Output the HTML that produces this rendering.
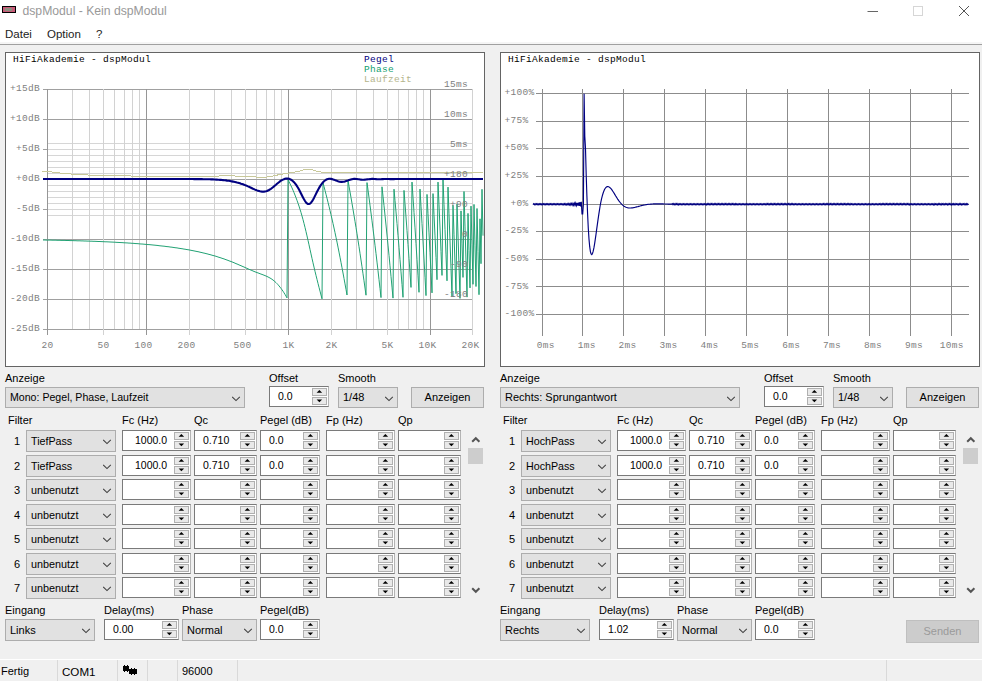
<!DOCTYPE html>
<html><head><meta charset="utf-8"><style>
*{margin:0;padding:0;box-sizing:border-box}
html,body{width:982px;height:681px;overflow:hidden;background:#f0f0f0;font-family:"Liberation Sans",sans-serif;font-size:11px;color:#000}
.a{position:absolute;white-space:nowrap}
</style></head><body>
<div class="a" style="left:0;top:0;width:982px;height:44px;background:#fff"></div>
<div class="a" style="left:0;top:42px;width:982px;height:2px;background:#f5f5f5"></div>
<div class="a" style="left:0;top:44px;width:982px;height:1px;background:#a0a0a0"></div>
<svg class="a" style="left:0;top:0" width="982" height="681" shape-rendering="crispEdges">
<rect x="5.5" y="52.5" width="479" height="314" fill="#fff" stroke="#646464"/>
<line x1="47" x2="473" y1="143.5" y2="143.5" stroke="#d6d6d6"/>
<line x1="47" x2="473" y1="149.5" y2="149.5" stroke="#d6d6d6"/>
<line x1="47" x2="473" y1="155.5" y2="155.5" stroke="#d6d6d6"/>
<line x1="47" x2="473" y1="161.5" y2="161.5" stroke="#d6d6d6"/>
<line x1="47" x2="473" y1="167.5" y2="167.5" stroke="#d6d6d6"/>
<line x1="47" x2="473" y1="173.5" y2="173.5" stroke="#d6d6d6"/>
<line x1="47" x2="473" y1="185.5" y2="185.5" stroke="#d6d6d6"/>
<line x1="47" x2="473" y1="191.5" y2="191.5" stroke="#d6d6d6"/>
<line x1="47" x2="473" y1="197.5" y2="197.5" stroke="#d6d6d6"/>
<line x1="47" x2="473" y1="203.5" y2="203.5" stroke="#d6d6d6"/>
<line x1="47" x2="473" y1="209.5" y2="209.5" stroke="#d6d6d6"/>
<line x1="47" x2="473" y1="215.5" y2="215.5" stroke="#d6d6d6"/>
<line x1="72.5" x2="72.5" y1="89" y2="329" stroke="#d2d2d2"/>
<line x1="89.5" x2="89.5" y1="89" y2="329" stroke="#d2d2d2"/>
<line x1="114.5" x2="114.5" y1="89" y2="329" stroke="#d2d2d2"/>
<line x1="124.5" x2="124.5" y1="89" y2="329" stroke="#d2d2d2"/>
<line x1="132.5" x2="132.5" y1="89" y2="329" stroke="#d2d2d2"/>
<line x1="139.5" x2="139.5" y1="89" y2="329" stroke="#d2d2d2"/>
<line x1="214.5" x2="214.5" y1="89" y2="329" stroke="#d2d2d2"/>
<line x1="231.5" x2="231.5" y1="89" y2="329" stroke="#d2d2d2"/>
<line x1="256.5" x2="256.5" y1="89" y2="329" stroke="#d2d2d2"/>
<line x1="266.5" x2="266.5" y1="89" y2="329" stroke="#d2d2d2"/>
<line x1="274.5" x2="274.5" y1="89" y2="329" stroke="#d2d2d2"/>
<line x1="281.5" x2="281.5" y1="89" y2="329" stroke="#d2d2d2"/>
<line x1="356.5" x2="356.5" y1="89" y2="329" stroke="#d2d2d2"/>
<line x1="373.5" x2="373.5" y1="89" y2="329" stroke="#d2d2d2"/>
<line x1="398.5" x2="398.5" y1="89" y2="329" stroke="#d2d2d2"/>
<line x1="408.5" x2="408.5" y1="89" y2="329" stroke="#d2d2d2"/>
<line x1="416.5" x2="416.5" y1="89" y2="329" stroke="#d2d2d2"/>
<line x1="423.5" x2="423.5" y1="89" y2="329" stroke="#d2d2d2"/>
<line x1="43" x2="473" y1="89.5" y2="89.5" stroke="#a0a0a0"/>
<line x1="43" x2="473" y1="119.5" y2="119.5" stroke="#a0a0a0"/>
<line x1="43" x2="47" y1="149.5" y2="149.5" stroke="#a0a0a0"/>
<line x1="43" x2="473" y1="179.5" y2="179.5" stroke="#a0a0a0"/>
<line x1="43" x2="47" y1="209.5" y2="209.5" stroke="#a0a0a0"/>
<line x1="43" x2="473" y1="239.5" y2="239.5" stroke="#a0a0a0"/>
<line x1="43" x2="473" y1="269.5" y2="269.5" stroke="#a0a0a0"/>
<line x1="43" x2="473" y1="299.5" y2="299.5" stroke="#a0a0a0"/>
<line x1="43" x2="473" y1="329.5" y2="329.5" stroke="#a0a0a0"/>
<line x1="47.5" x2="47.5" y1="89" y2="335" stroke="#969696"/>
<line x1="146.5" x2="146.5" y1="89" y2="335" stroke="#969696"/>
<line x1="288.5" x2="288.5" y1="89" y2="335" stroke="#969696"/>
<line x1="430.5" x2="430.5" y1="89" y2="335" stroke="#969696"/>
<line x1="103.5" x2="103.5" y1="89" y2="335" stroke="#d2d2d2"/>
<line x1="189.5" x2="189.5" y1="89" y2="335" stroke="#d2d2d2"/>
<line x1="245.5" x2="245.5" y1="89" y2="335" stroke="#d2d2d2"/>
<line x1="331.5" x2="331.5" y1="89" y2="335" stroke="#d2d2d2"/>
<line x1="387.5" x2="387.5" y1="89" y2="335" stroke="#d2d2d2"/>
<line x1="472.5" x2="472.5" y1="89" y2="335" stroke="#d2d2d2"/>
<g font-family="Liberation Mono" font-size="9.5" letter-spacing="0.3" fill="#808080">
<text x="40" y="91.3" text-anchor="end">+15dB</text>
<text x="40" y="121.3" text-anchor="end">+10dB</text>
<text x="40" y="151.3" text-anchor="end">+5dB</text>
<text x="40" y="181.3" text-anchor="end">+0dB</text>
<text x="40" y="211.3" text-anchor="end">-5dB</text>
<text x="40" y="241.3" text-anchor="end">-10dB</text>
<text x="40" y="271.3" text-anchor="end">-15dB</text>
<text x="40" y="301.3" text-anchor="end">-20dB</text>
<text x="40" y="331.3" text-anchor="end">-25dB</text>
<text x="41.5" y="348.3">20</text>
<text x="97.5" y="348.3">50</text>
<text x="134.5" y="348.3">100</text>
<text x="177.5" y="348.3">200</text>
<text x="233.5" y="348.3">500</text>
<text x="282.5" y="348.3">1K</text>
<text x="325.5" y="348.3">2K</text>
<text x="381.5" y="348.3">5K</text>
<text x="418.5" y="348.3">10K</text>
<text x="461.5" y="348.3">20K</text>
</g>
<g font-family="Liberation Mono" font-size="9.5" letter-spacing="0.3">
<text x="13" y="62" fill="#000">HiFiAkademie - dspModul</text>
<text x="364" y="62" fill="#000080">Pegel</text>
<text x="364" y="72" fill="#10a070">Phase</text>
<text x="364" y="82" fill="#b4b48c">Laufzeit</text>
</g>
<polyline fill="none" stroke="#c8c89a" stroke-width="1" points="42.0,171.2 47.0,171.2 47.4,171.3 47.7,171.3 48.1,171.4 48.4,171.4 48.8,171.5 49.1,171.5 49.5,171.6 49.8,171.6 50.2,171.7 50.6,171.8 50.9,171.8 51.3,171.9 51.6,171.9 52.0,172.0 52.3,172.0 52.7,172.1 53.0,172.1 53.4,172.2 53.8,172.2 54.1,172.2 54.5,172.3 54.8,172.3 55.2,172.4 55.5,172.4 55.9,172.5 56.2,172.5 56.6,172.6 56.9,172.6 57.3,172.6 57.7,172.7 58.0,172.7 58.4,172.8 58.7,172.8 59.1,172.9 59.4,172.9 59.8,172.9 60.1,173.0 60.5,173.0 60.9,173.0 61.2,173.1 61.6,173.1 61.9,173.2 62.3,173.2 62.6,173.2 63.0,173.3 63.3,173.3 63.7,173.3 64.1,173.4 64.4,173.4 64.8,173.4 65.1,173.5 65.5,173.5 65.8,173.5 66.2,173.6 66.5,173.6 66.9,173.6 67.3,173.7 67.6,173.7 68.0,173.7 68.3,173.7 68.7,173.8 69.0,173.8 69.4,173.8 69.7,173.9 70.1,173.9 70.4,173.9 70.8,173.9 71.2,174.0 71.5,174.0 71.9,174.0 72.2,174.0 72.6,174.1 72.9,174.1 73.3,174.1 73.6,174.1 74.0,174.2 74.4,174.2 74.7,174.2 75.1,174.2 75.4,174.3 75.8,174.3 76.1,174.3 76.5,174.3 76.8,174.4 77.2,174.4 77.6,174.4 77.9,174.4 78.3,174.4 78.6,174.5 79.0,174.5 79.3,174.5 79.7,174.5 80.0,174.5 80.4,174.6 80.8,174.6 81.1,174.6 81.5,174.6 81.8,174.6 82.2,174.7 82.5,174.7 82.9,174.7 83.2,174.7 83.6,174.7 84.0,174.8 84.3,174.8 84.7,174.8 85.0,174.8 85.4,174.8 85.7,174.8 86.1,174.9 86.4,174.9 86.8,174.9 87.1,174.9 87.5,174.9 87.9,174.9 88.2,175.0 88.6,175.0 88.9,175.0 89.3,175.0 89.6,175.0 90.0,175.0 90.3,175.0 90.7,175.1 91.1,175.1 91.4,175.1 91.8,175.1 92.1,175.1 92.5,175.1 92.8,175.1 93.2,175.2 93.5,175.2 93.9,175.2 94.3,175.2 94.6,175.2 95.0,175.2 95.3,175.2 95.7,175.2 96.0,175.3 96.4,175.3 96.7,175.3 97.1,175.3 97.5,175.3 97.8,175.3 98.2,175.3 98.5,175.3 98.9,175.3 99.2,175.4 99.6,175.4 99.9,175.4 100.3,175.4 100.6,175.4 101.0,175.4 101.4,175.4 101.7,175.4 102.1,175.4 102.4,175.4 102.8,175.5 103.1,175.5 103.5,175.5 103.8,175.5 104.2,175.5 104.6,175.5 104.9,175.5 105.3,175.5 105.6,175.5 106.0,175.5 106.3,175.5 106.7,175.6 107.0,175.6 107.4,175.6 107.8,175.6 108.1,175.6 108.5,175.6 108.8,175.6 109.2,175.6 109.5,175.6 109.9,175.6 110.2,175.6 110.6,175.6 111.0,175.7 111.3,175.7 111.7,175.7 112.0,175.7 112.4,175.7 112.7,175.7 113.1,175.7 113.4,175.7 113.8,175.7 114.2,175.7 114.5,175.7 114.9,175.7 115.2,175.7 115.6,175.7 115.9,175.7 116.3,175.8 116.6,175.8 117.0,175.8 117.3,175.8 117.7,175.8 118.1,175.8 118.4,175.8 118.8,175.8 119.1,175.8 119.5,175.8 119.8,175.8 120.2,175.8 120.5,175.8 120.9,175.8 121.3,175.8 121.6,175.8 122.0,175.8 122.3,175.8 122.7,175.9 123.0,175.9 123.4,175.9 123.7,175.9 124.1,175.9 124.5,175.9 124.8,175.9 125.2,175.9 125.5,175.9 125.9,175.9 126.2,175.9 126.6,175.9 126.9,175.9 127.3,175.9 127.7,175.9 128.0,175.9 128.4,175.9 128.7,175.9 129.1,175.9 129.4,175.9 129.8,175.9 130.1,175.9 130.5,175.9 130.8,176.0 131.2,176.0 131.6,176.0 131.9,176.0 132.3,176.0 132.6,176.0 133.0,176.0 133.3,176.0 133.7,176.0 134.0,176.0 134.4,176.0 134.8,176.0 135.1,176.0 135.5,176.0 135.8,176.0 136.2,176.0 136.5,176.0 136.9,176.0 137.2,176.0 137.6,176.0 138.0,176.0 138.3,176.0 138.7,176.0 139.0,176.0 139.4,176.0 139.7,176.0 140.1,176.0 140.4,176.0 140.8,176.0 141.2,176.0 141.5,176.0 141.9,176.0 142.2,176.0 142.6,176.0 142.9,176.1 143.3,176.1 143.6,176.1 144.0,176.1 144.4,176.1 144.7,176.1 145.1,176.1 145.4,176.1 145.8,176.1 146.1,176.1 146.5,176.1 146.8,176.1 147.2,176.1 147.5,176.1 147.9,176.1 148.3,176.1 148.6,176.1 149.0,176.1 149.3,176.1 149.7,176.1 150.0,176.1 150.4,176.1 150.7,176.1 151.1,176.1 151.5,176.1 151.8,176.1 152.2,176.1 152.5,176.1 152.9,176.1 153.2,176.1 153.6,176.1 153.9,176.1 154.3,176.1 154.7,176.1 155.0,176.1 155.4,176.1 155.7,176.1 156.1,176.1 156.4,176.1 156.8,176.1 157.1,176.1 157.5,176.1 157.9,176.1 158.2,176.1 158.6,176.1 158.9,176.1 159.3,176.1 159.6,176.1 160.0,176.1 160.3,176.1 160.7,176.1 161.1,176.1 161.4,176.1 161.8,176.1 162.1,176.1 162.5,176.1 162.8,176.1 163.2,176.1 163.5,176.1 163.9,176.1 164.2,176.1 164.6,176.1 165.0,176.1 165.3,176.1 165.7,176.1 166.0,176.1 166.4,176.1 166.7,176.1 167.1,176.1 167.4,176.1 167.8,176.1 168.2,176.1 168.5,176.1 168.9,176.1 169.2,176.1 169.6,176.1 169.9,176.1 170.3,176.1 170.6,176.1 171.0,176.1 171.4,176.1 171.7,176.1 172.1,176.1 172.4,176.1 172.8,176.1 173.1,176.1 173.5,176.1 173.8,176.1 174.2,176.1 174.6,176.1 174.9,176.1 175.3,176.1 175.6,176.1 176.0,176.1 176.3,176.1 176.7,176.1 177.0,176.1 177.4,176.1 177.7,176.1 178.1,176.1 178.5,176.1 178.8,176.1 179.2,176.1 179.5,176.1 179.9,176.1 180.2,176.1 180.6,176.1 180.9,176.1 181.3,176.1 181.7,176.1 182.0,176.1 182.4,176.1 182.7,176.1 183.1,176.1 183.4,176.1 183.8,176.1 184.1,176.1 184.5,176.1 184.9,176.1 185.2,176.1 185.6,176.1 185.9,176.1 186.3,176.1 186.6,176.1 187.0,176.1 187.3,176.1 187.7,176.1 188.1,176.1 188.4,176.1 188.8,176.1 189.1,176.1 189.5,176.1 189.8,176.1 190.2,176.1 190.5,176.1 190.9,176.1 191.3,176.1 191.6,176.1 192.0,176.1 192.3,176.1 192.7,176.1 193.0,176.1 193.4,176.1 193.7,176.1 194.1,176.1 194.4,176.1 194.8,176.1 195.2,176.1 195.5,176.1 195.9,176.1 196.2,176.1 196.6,176.1 196.9,176.1 197.3,176.1 197.6,176.1 198.0,176.1 198.4,176.1 198.7,176.1 199.1,176.1 199.4,176.1 199.8,176.1 200.1,176.1 200.5,176.1 200.8,176.1 201.2,176.1 201.6,176.1 201.9,176.1 202.3,176.1 202.6,176.1 203.0,176.1 203.3,176.1 203.7,176.1 204.0,176.0 204.4,176.0 204.8,176.0 205.1,176.0 205.5,176.0 205.8,176.0 206.2,176.0 206.5,176.0 206.9,176.0 207.2,176.0 207.6,176.0 207.9,176.0 208.3,176.0 208.7,176.0 209.0,176.0 209.4,176.0 209.7,176.0 210.1,176.0 210.4,176.0 210.8,176.0 211.1,176.0 211.5,176.0 211.9,176.0 212.2,176.0 212.6,176.0 212.9,176.0 213.3,176.0 213.6,176.0 214.0,176.0 214.3,176.0 214.7,176.0 215.1,176.0 215.4,176.0 215.8,176.0 216.1,176.0 216.5,176.0 216.8,176.0 217.2,176.0 217.5,176.0 217.9,176.0 218.3,176.0 218.6,176.0 219.0,176.0 219.3,175.9 219.7,175.9 220.0,175.9 220.4,175.9 220.7,175.9 221.1,175.9 221.5,175.9 221.8,175.9 222.2,175.9 222.5,175.9 222.9,175.9 223.2,175.9 223.6,175.9 223.9,175.9 224.3,175.9 224.6,175.9 225.0,175.9 225.4,175.9 225.7,175.9 226.1,175.9 226.4,175.9 226.8,175.9 227.1,175.9 227.5,175.9 227.8,175.9 228.2,175.9 228.6,175.9 228.9,175.9 229.3,175.9 229.6,175.9 230.0,175.9 230.3,175.9 230.7,175.9 231.0,175.9 231.4,175.9 231.8,175.9 232.1,175.9 232.5,175.9 232.8,175.9 233.2,175.9 233.5,175.9 233.9,175.9 234.2,175.9 234.6,176.0 235.0,176.0 235.3,176.0 235.7,176.0 236.0,176.0 236.4,176.0 236.7,176.0 237.1,176.0 237.4,176.0 237.8,176.0 238.1,176.0 238.5,176.0 238.9,176.0 239.2,176.0 239.6,176.0 239.9,176.1 240.3,176.1 240.6,176.1 241.0,176.1 241.3,176.1 241.7,176.1 242.1,176.1 242.4,176.1 242.8,176.1 243.1,176.2 243.5,176.2 243.8,176.2 244.2,176.2 244.5,176.2 244.9,176.2 245.3,176.2 245.6,176.3 246.0,176.3 246.3,176.3 246.7,176.3 247.0,176.3 247.4,176.4 247.7,176.4 248.1,176.4 248.5,176.4 248.8,176.4 249.2,176.5 249.5,176.5 249.9,176.5 250.2,176.5 250.6,176.6 250.9,176.6 251.3,176.6 251.7,176.6 252.0,176.7 252.4,176.7 252.7,176.7 253.1,176.7 253.4,176.8 253.8,176.8 254.1,176.8 254.5,176.8 254.8,176.9 255.2,176.9 255.6,176.9 255.9,176.9 256.3,177.0 256.6,177.0 257.0,177.0 257.3,177.0 257.7,177.1 258.0,177.1 258.4,177.1 258.8,177.1 259.1,177.1 259.5,177.2 259.8,177.2 260.2,177.2 260.5,177.2 260.9,177.2 261.2,177.2 261.6,177.2 262.0,177.2 262.3,177.2 262.7,177.2 263.0,177.2 263.4,177.2 263.7,177.2 264.1,177.2 264.4,177.2 264.8,177.2 265.2,177.1 265.5,177.1 265.9,177.1 266.2,177.1 266.6,177.0 266.9,177.0 267.3,177.0 267.6,176.9 268.0,176.9 268.3,176.8 268.7,176.8 269.1,176.7 269.4,176.7 269.8,176.6 270.1,176.5 270.5,176.5 270.8,176.4 271.2,176.4 271.5,176.3 271.9,176.2 272.3,176.1 272.6,176.1 273.0,176.0 273.3,175.9 273.7,175.9 274.0,175.8 274.4,175.7 274.7,175.6 275.1,175.5 275.5,175.5 275.8,175.4 276.2,175.3 276.5,175.2 276.9,175.2 277.2,175.1 277.6,175.0 277.9,174.9 278.3,174.9 278.7,174.8 279.0,174.7 279.4,174.6 279.7,174.6 280.1,174.5 280.4,174.4 280.8,174.4 281.1,174.3 281.5,174.2 281.9,174.2 282.2,174.1 282.6,174.0 282.9,174.0 283.3,173.9 283.6,173.9 284.0,173.8 284.3,173.7 284.7,173.7 285.0,173.6 285.4,173.6 285.8,173.5 286.1,173.4 286.5,173.4 286.8,173.3 287.2,173.3 287.5,173.2 287.9,173.2 288.2,173.1 288.6,173.1 289.0,173.0 289.3,172.9 289.7,172.9 290.0,172.8 290.4,172.8 290.7,172.7 291.1,172.7 291.4,172.6 291.8,172.6 292.2,172.5 292.5,172.4 292.9,172.4 293.2,172.3 293.6,172.3 293.9,172.2 294.3,172.1 294.6,172.1 295.0,172.0 295.4,171.9 295.7,171.9 296.1,171.8 296.4,171.7 296.8,171.7 297.1,171.6 297.5,171.5 297.8,171.4 298.2,171.3 298.5,171.2 298.9,171.2 299.3,171.1 299.6,171.0 300.0,170.9 300.3,170.8 300.7,170.7 301.0,170.6 301.4,170.5 301.7,170.4 302.1,170.3 302.5,170.1 302.8,170.0 303.2,169.9 303.5,169.8 303.9,169.7 304.2,169.6 304.6,169.5 304.9,169.4 305.3,169.3 305.7,169.2 306.0,169.2 306.4,169.1 306.7,169.1 307.1,169.0 307.4,169.0 307.8,169.0 308.1,169.0 308.5,169.0 308.9,169.0 309.2,169.0 309.6,169.1 309.9,169.1 310.3,169.2 310.6,169.3 311.0,169.4 311.3,169.5 311.7,169.6 312.1,169.7 312.4,169.8 312.8,169.9 313.1,170.1 313.5,170.2 313.8,170.3 314.2,170.4 314.5,170.5 314.9,170.7 315.2,170.8 315.6,170.9 316.0,171.0 316.3,171.1 316.7,171.2 317.0,171.3 317.4,171.4 317.7,171.5 318.1,171.5 318.4,171.6 318.8,171.7 319.2,171.8 319.5,171.8 319.9,171.9 320.2,171.9 320.6,172.0 320.9,172.0 321.3,172.1 321.6,172.1 322.0,172.2 322.4,172.2 322.7,172.2 323.1,172.3 323.4,172.3 323.8,172.3 324.1,172.3 324.5,172.4 324.8,172.4 325.2,172.4 325.6,172.4 325.9,172.4 326.3,172.4 326.6,172.4 327.0,172.4 327.3,172.4 327.7,172.5 328.0,172.5 328.4,172.5 328.7,172.5 329.1,172.4 329.5,172.4 329.8,172.4 330.2,172.4 330.5,172.4 330.9,172.4 331.2,172.4 331.6,172.4 331.9,172.4 332.3,172.4 332.7,172.4 333.0,172.3 333.4,172.3 333.7,172.3 334.1,172.3 334.4,172.3 334.8,172.3 335.1,172.2 335.5,172.2 335.9,172.2 336.2,172.2 336.6,172.2 336.9,172.2 337.3,172.2 337.6,172.2 338.0,172.1 338.3,172.1 338.7,172.1 339.1,172.1 339.4,172.1 339.8,172.1 340.1,172.1 340.5,172.1 340.8,172.1 341.2,172.1 341.5,172.1 341.9,172.1 342.3,172.2 342.6,172.2 343.0,172.2 343.3,172.2 343.7,172.2 344.0,172.2 344.4,172.2 344.7,172.3 345.1,172.3 345.4,172.3 345.8,172.3 346.2,172.3 346.5,172.3 346.9,172.4 347.2,172.4 347.6,172.4 347.9,172.4 348.3,172.4 348.6,172.5 349.0,172.5 349.4,172.5 349.7,172.5 350.1,172.5 350.4,172.5 350.8,172.5 351.1,172.6 351.5,172.6 351.8,172.6 352.2,172.6 352.6,172.6 352.9,172.6 353.3,172.6 353.6,172.6 354.0,172.6 354.3,172.6 354.7,172.6 355.0,172.6 355.4,172.6 355.8,172.6 356.1,172.6 356.5,172.6 356.8,172.6 357.2,172.6 357.5,172.6 357.9,172.6 358.2,172.6 358.6,172.6 358.9,172.6 359.3,172.6 359.7,172.6 360.0,172.6 360.4,172.6 360.7,172.6 361.1,172.6 361.4,172.6 361.8,172.6 362.1,172.6 362.5,172.6 362.9,172.6 363.2,172.6 363.6,172.6 363.9,172.6 364.3,172.6 364.6,172.6 365.0,172.6 365.3,172.6 365.7,172.6 366.1,172.6 366.4,172.6 366.8,172.6 367.1,172.6 367.5,172.7 367.8,172.7 368.2,172.7 368.5,172.7 368.9,172.7 369.3,172.7 369.6,172.7 370.0,172.7 370.3,172.7 370.7,172.7 371.0,172.7 371.4,172.7 371.7,172.7 372.1,172.7 372.5,172.7 372.8,172.7 373.2,172.7 373.5,172.7 373.9,172.7 374.2,172.7 374.6,172.7 374.9,172.7 375.3,172.7 375.6,172.7 376.0,172.7 376.4,172.7 376.7,172.7 377.1,172.7 377.4,172.7 377.8,172.7 378.1,172.7 378.5,172.7 378.8,172.7 379.2,172.7 379.6,172.7 379.9,172.7 380.3,172.7 380.6,172.7 381.0,172.7 381.3,172.7 381.7,172.7 382.0,172.7 382.4,172.7 382.8,172.7 383.1,172.8 383.5,172.8 383.8,172.8 384.2,172.8 384.5,172.8 384.9,172.8 385.2,172.8 385.6,172.8 386.0,172.8 386.3,172.8 386.7,172.8 387.0,172.8 387.4,172.8 387.7,172.8 388.1,172.8 388.4,172.8 388.8,172.8 389.2,172.8 389.5,172.8 389.9,172.8 390.2,172.8 390.6,172.8 390.9,172.8 391.3,172.8 391.6,172.8 392.0,172.8 392.3,172.8 392.7,172.8 393.1,172.8 393.4,172.8 393.8,172.8 394.1,172.8 394.5,172.8 394.8,172.8 395.2,172.8 395.5,172.8 395.9,172.8 396.3,172.8 396.6,172.8 397.0,172.8 397.3,172.8 397.7,172.8 398.0,172.8 398.4,172.8 398.7,172.8 399.1,172.8 399.5,172.8 399.8,172.8 400.2,172.8 400.5,172.8 400.9,172.8 401.2,172.8 401.6,172.8 401.9,172.8 402.3,172.8 402.7,172.8 403.0,172.8 403.4,172.8 403.7,172.8 404.1,172.8 404.4,172.8 404.8,172.8 405.1,172.8 405.5,172.8 405.8,172.8 406.2,172.8 406.6,172.8 406.9,172.8 407.3,172.8 407.6,172.8 408.0,172.8 408.3,172.8 408.7,172.8 409.0,172.8 409.4,172.8 409.8,172.8 410.1,172.8 410.5,172.8 410.8,172.8 411.2,172.8 411.5,172.8 411.9,172.8 412.2,172.8 412.6,172.8 413.0,172.8 413.3,172.8 413.7,172.8 414.0,172.8 414.4,172.8 414.7,172.8 415.1,172.8 415.4,172.8 415.8,172.8 416.2,172.8 416.5,172.8 416.9,172.8 417.2,172.8 417.6,172.8 417.9,172.8 418.3,172.8 418.6,172.8 419.0,172.8 419.4,172.8 419.7,172.8 420.1,172.8 420.4,172.8 420.8,172.8 421.1,172.8 421.5,172.8 421.8,172.8 422.2,172.8 422.5,172.8 422.9,172.8 423.3,172.8 423.6,172.8 424.0,172.8 424.3,172.8 424.7,172.8 425.0,172.8 425.4,172.8 425.7,172.8 426.1,172.8 426.5,172.8 426.8,172.8 427.2,172.8 427.5,172.9 427.9,172.9 428.2,172.9 428.6,172.9 428.9,172.9 429.3,172.9 429.7,172.9 430.0,172.9 430.4,172.9 430.7,172.9 431.1,172.9 431.4,172.9 431.8,172.9 432.1,172.9 432.5,172.9 432.9,172.9 433.2,172.9 433.6,172.9 433.9,172.9 434.3,172.9 434.6,172.9 435.0,172.9 435.3,172.9 435.7,172.9 436.0,172.9 436.4,172.9 436.8,172.9 437.1,172.9 437.5,172.9 437.8,172.9 438.2,172.9 438.5,172.9 438.9,172.9 439.2,172.9 439.6,172.9 440.0,172.9 440.3,172.9 440.7,172.9 441.0,172.9 441.4,172.9 441.7,172.9 442.1,172.9 442.4,172.9 442.8,172.9 443.2,172.9 443.5,172.9 443.9,172.9 444.2,172.9 444.6,172.9 444.9,172.9 445.3,172.9 445.6,172.9 446.0,172.9 446.4,172.9 446.7,172.9 447.1,172.9 447.4,172.9 447.8,172.9 448.1,172.9 448.5,172.9 448.8,172.9 449.2,172.9 449.6,172.9 449.9,172.9 450.3,172.9 450.6,172.9 451.0,172.9 451.3,172.9 451.7,172.9 452.0,172.9 452.4,172.9 452.7,172.9 453.1,172.9 453.5,172.9 453.8,172.9 454.2,172.9 454.5,172.9 454.9,172.9 455.2,172.9 455.6,172.9 455.9,172.9 456.3,172.9 456.7,172.9 457.0,172.9 457.4,172.9 457.7,172.9 458.1,172.9 458.4,172.9 458.8,172.9 459.1,172.9 459.5,172.9 459.9,172.9 460.2,172.9 460.6,172.9 460.9,172.9 461.3,172.9 461.6,172.9 462.0,172.9 462.3,172.9 462.7,172.9 463.1,172.9 463.4,172.9 463.8,172.9 464.1,172.9 464.5,172.9 464.8,172.9 465.2,172.9 465.5,172.9 465.9,172.9 466.2,172.9 466.6,172.9 467.0,172.9 467.3,172.9 467.7,172.9 468.0,172.9 468.4,172.9 468.7,172.9 469.1,172.9 469.4,172.9 469.8,172.9 470.2,172.9 470.5,172.9 470.9,172.9 471.2,172.9 471.6,172.9 471.9,172.9 472.3,172.9 472.6,172.9 473.0,172.9 483.0,172.9"/>
<polyline fill="none" stroke="#22a274" stroke-width="1" shape-rendering="geometricPrecision" points="43.0,240.0 44.0,240.0 45.0,240.0 46.0,240.1 47.0,240.1 48.0,240.1 49.0,240.1 50.0,240.1 51.0,240.1 52.0,240.2 53.0,240.2 54.0,240.2 55.0,240.2 56.0,240.2 57.0,240.3 58.0,240.3 59.0,240.3 60.0,240.3 61.0,240.4 62.0,240.4 63.0,240.4 64.0,240.4 65.0,240.4 66.0,240.5 67.0,240.5 68.0,240.5 69.0,240.5 70.0,240.6 71.0,240.6 72.0,240.6 73.0,240.6 74.0,240.7 75.0,240.7 76.0,240.7 77.0,240.8 78.0,240.8 79.0,240.8 80.0,240.8 81.0,240.9 82.0,240.9 83.0,240.9 84.0,241.0 85.0,241.0 86.0,241.0 87.0,241.1 88.0,241.1 89.0,241.1 90.0,241.2 91.0,241.2 92.0,241.2 93.0,241.3 94.0,241.3 95.0,241.3 96.0,241.4 97.0,241.4 98.0,241.5 99.0,241.5 100.0,241.5 101.0,241.6 102.0,241.6 103.0,241.7 104.0,241.7 105.0,241.8 106.0,241.8 107.0,241.8 108.0,241.9 109.0,241.9 110.0,242.0 111.0,242.0 112.0,242.1 113.0,242.1 114.0,242.2 115.0,242.2 116.0,242.3 117.0,242.4 118.0,242.4 119.0,242.5 120.0,242.5 121.0,242.6 122.0,242.6 123.0,242.7 124.0,242.8 125.0,242.8 126.0,242.9 127.0,242.9 128.0,243.0 129.0,243.1 130.0,243.1 131.0,243.2 132.0,243.3 133.0,243.3 134.0,243.4 135.0,243.5 136.0,243.6 137.0,243.6 138.0,243.7 139.0,243.8 140.0,243.9 141.0,244.0 142.0,244.0 143.0,244.1 144.0,244.2 145.0,244.3 146.0,244.4 147.0,244.5 148.0,244.6 149.0,244.6 150.0,244.7 151.0,244.8 152.0,244.9 153.0,245.0 154.0,245.1 155.0,245.2 156.0,245.3 157.0,245.4 158.0,245.5 159.0,245.7 160.0,245.8 161.0,245.9 162.0,246.0 163.0,246.1 164.0,246.2 165.0,246.3 166.0,246.5 167.0,246.6 168.0,246.7 169.0,246.8 170.0,247.0 171.0,247.1 172.0,247.2 173.0,247.4 174.0,247.5 175.0,247.7 176.0,247.8 177.0,247.9 178.0,248.1 179.0,248.3 180.0,248.4 181.0,248.6 182.0,248.7 183.0,248.9 184.0,249.1 185.0,249.2 186.0,249.4 187.0,249.6 188.0,249.7 189.0,249.9 190.0,250.1 191.0,250.3 192.0,250.5 193.0,250.7 194.0,250.9 195.0,251.1 196.0,251.3 197.0,251.5 198.0,251.7 199.0,251.9 200.0,252.2 201.0,252.4 202.0,252.6 203.0,252.9 204.0,253.1 205.0,253.3 206.0,253.6 207.0,253.8 208.0,254.1 209.0,254.4 210.0,254.6 211.0,254.9 212.0,255.2 213.0,255.5 214.0,255.7 215.0,256.0 216.0,256.3 217.0,256.6 218.0,257.0 219.0,257.3 220.0,257.6 221.0,257.9 222.0,258.3 223.0,258.6 224.0,258.9 225.0,259.3 226.0,259.7 227.0,260.0 228.0,260.4 229.0,260.8 230.0,261.2 231.0,261.5 232.0,261.9 233.0,262.3 234.0,262.7 235.0,263.2 236.0,263.6 237.0,264.0 238.0,264.4 239.0,264.9 240.0,265.3 241.0,265.7 242.0,266.2 243.0,266.6 244.0,267.0 245.0,267.5 246.0,267.9 247.0,268.4 248.0,268.8 249.0,269.3 250.0,269.7 251.0,270.1 252.0,270.5 253.0,271.0 254.0,271.4 255.0,271.8 256.0,272.2 257.0,272.6 258.0,272.9 259.0,273.3 260.0,273.7 261.0,274.1 262.0,274.4 263.0,274.8 264.0,275.2 265.0,275.6 266.0,276.0 267.0,276.5 268.0,276.9 269.0,277.5 270.0,278.0 271.0,278.6 272.0,279.3 273.0,280.0 274.0,280.8 275.0,281.7 276.0,282.6 277.0,283.6 278.0,284.7 279.0,285.9 280.0,287.1 281.0,288.4 282.0,289.8 283.0,291.2 284.0,292.8 285.0,294.4 286.0,296.1 287.0,297.9 288.0,179.7 289.0,181.6 290.0,183.7 291.0,185.8 292.0,187.9 293.0,190.2 294.0,192.6 295.0,195.1 296.0,197.7 297.0,200.4 298.0,203.2 299.0,206.1 300.0,209.3 301.0,212.5 302.0,216.0 303.0,219.6 304.0,223.4 305.0,227.4 306.0,231.6 307.0,235.9 308.0,240.3 309.0,244.8 310.0,249.4 311.0,253.9 312.0,258.4 313.0,262.8 314.0,267.1 315.0,271.3 316.0,275.4 317.0,279.4 318.0,283.4 319.0,287.3 320.0,291.1 321.0,295.0 322.0,298.8 323.0,182.7 324.0,186.5 325.0,190.4 326.0,194.3 327.0,198.2 328.0,202.3 329.0,206.3 330.0,210.5 331.0,214.7 332.0,219.0 333.0,223.5 334.0,228.0 335.0,232.6 336.0,237.3 337.0,242.1 338.0,247.1 339.0,252.1 340.0,257.2 341.0,262.4 342.0,267.7 343.0,273.0 344.0,278.4 345.0,283.9 346.0,289.4 347.0,295.0 348.0,180.5 349.0,186.2 350.0,191.9 351.0,197.6 352.0,203.4 353.0,209.3 354.0,215.3 355.0,221.4 356.0,227.5 357.0,233.8 358.0,240.2 359.0,246.7 360.0,253.3 361.0,260.0 362.0,266.8 363.0,273.8 364.0,280.8 365.0,288.0 366.0,295.2 367.0,182.6 368.0,190.0 369.0,197.6 370.0,205.2 371.0,213.0 372.0,220.8 373.0,228.8 374.0,236.9 375.0,245.2 376.0,253.5 377.0,262.1 378.0,270.7 379.0,279.6 380.0,288.5 381.0,297.6 382.0,186.8 383.0,196.2 384.0,205.6 385.0,215.3 386.0,225.0 387.0,235.0 388.0,245.1 389.0,255.3 390.0,265.8 391.0,276.4 392.0,287.1 393.0,298.1 394.0,189.2 395.0,200.5 396.0,211.9 397.0,223.5 398.0,235.3 399.0,247.3 400.0,259.5 401.0,271.9 402.0,284.5 403.0,297.3 404.0,190.4 405.0,203.6 406.0,217.0 407.0,230.6 408.0,244.5 409.0,258.5 410.0,272.8 411.0,287.4 412.0,182.1 413.0,197.1 414.0,212.4 415.0,227.9 416.0,243.6 417.0,259.6 418.0,275.8 419.0,292.3 420.0,189.1 421.0,206.2 422.0,223.5 423.0,241.1 424.0,259.0 425.0,277.2 426.0,295.6 427.0,194.4 428.0,213.5 429.0,232.9 430.0,252.6 431.0,272.6 432.0,292.9 433.0,193.6 434.0,214.6 435.0,235.9 436.0,257.6 437.0,279.7 438.0,182.1 439.0,204.8 440.0,228.0 441.0,251.5 442.0,275.4 443.0,179.6 444.0,204.3 445.0,229.4 446.0,254.9 447.0,280.8 448.0,187.1 449.0,213.8 450.0,241.0 451.0,268.6 452.0,296.7 453.0,205.2 454.0,234.2 455.0,263.7 456.0,293.7 457.0,204.1 458.0,235.0 459.0,266.5 460.0,298.4 461.0,210.9 462.0,243.9 463.0,277.4 464.0,191.5 465.0,226.1 466.0,261.3 467.0,297.1 468.0,213.4 469.0,250.4 470.0,287.9 471.0,206.1 472.0,244.9 473.0,284.3 474.0,204.4 475.0,245.1 476.0,286.5 477.0,208.5 478.0,251.3 479.0,294.7 480.0,218.8 481.0,263.7 482.0,189.3 483.0,235.7"/>
<polyline fill="none" stroke="#000080" stroke-width="2.1" stroke-linejoin="round" shape-rendering="geometricPrecision" points="43.0,179.0 44.0,179.0 45.0,179.0 46.0,179.0 47.0,179.0 48.0,179.0 49.0,179.0 50.0,179.0 51.0,179.0 52.0,179.0 53.0,179.0 54.0,179.0 55.0,179.0 56.0,179.0 57.0,179.0 58.0,179.0 59.0,179.0 60.0,179.0 61.0,179.0 62.0,179.0 63.0,179.0 64.0,179.0 65.0,179.0 66.0,179.0 67.0,179.0 68.0,179.0 69.0,179.0 70.0,179.0 71.0,179.0 72.0,179.0 73.0,179.0 74.0,179.0 75.0,179.0 76.0,179.0 77.0,179.0 78.0,179.0 79.0,179.0 80.0,179.0 81.0,179.0 82.0,179.0 83.0,179.0 84.0,179.0 85.0,179.0 86.0,179.0 87.0,179.0 88.0,179.0 89.0,179.0 90.0,179.0 91.0,179.0 92.0,179.0 93.0,179.0 94.0,179.0 95.0,179.0 96.0,179.0 97.0,179.0 98.0,179.0 99.0,179.0 100.0,179.0 101.0,179.0 102.0,179.0 103.0,179.0 104.0,179.0 105.0,179.0 106.0,179.0 107.0,179.0 108.0,179.0 109.0,179.0 110.0,179.0 111.0,179.0 112.0,179.0 113.0,179.0 114.0,179.0 115.0,179.0 116.0,179.0 117.0,179.0 118.0,179.0 119.0,179.0 120.0,179.0 121.0,179.0 122.0,179.0 123.0,179.0 124.0,179.0 125.0,179.0 126.0,179.0 127.0,179.0 128.0,179.0 129.0,179.0 130.0,179.0 131.0,179.0 132.0,179.0 133.0,179.0 134.0,179.0 135.0,179.0 136.0,179.0 137.0,179.0 138.0,179.0 139.0,179.0 140.0,179.0 141.0,179.0 142.0,179.0 143.0,179.0 144.0,179.0 145.0,179.0 146.0,179.0 147.0,179.0 148.0,179.0 149.0,179.0 150.0,179.0 151.0,179.0 152.0,179.0 153.0,179.0 154.0,179.0 155.0,179.0 156.0,179.0 157.0,179.0 158.0,179.0 159.0,179.0 160.0,179.0 161.0,179.0 162.0,179.0 163.0,179.0 164.0,179.0 165.0,179.0 166.0,179.0 167.0,179.0 168.0,179.0 169.0,179.0 170.0,179.0 171.0,179.0 172.0,179.0 173.0,179.0 174.0,179.0 175.0,179.0 176.0,179.0 177.0,179.0 178.0,179.0 179.0,179.0 180.0,179.0 181.0,179.0 182.0,179.0 183.0,179.0 184.0,179.0 185.0,179.0 186.0,179.0 187.0,179.0 188.0,179.0 189.0,179.0 190.0,179.0 191.0,179.0 192.0,179.0 193.0,179.0 194.0,179.1 195.0,179.1 196.0,179.1 197.0,179.1 198.0,179.1 199.0,179.1 200.0,179.1 201.0,179.1 202.0,179.1 203.0,179.2 204.0,179.2 205.0,179.2 206.0,179.2 207.0,179.2 208.0,179.3 209.0,179.3 210.0,179.3 211.0,179.4 212.0,179.4 213.0,179.4 214.0,179.5 215.0,179.5 216.0,179.6 217.0,179.6 218.0,179.7 219.0,179.8 220.0,179.9 221.0,179.9 222.0,180.0 223.0,180.1 224.0,180.2 225.0,180.3 226.0,180.4 227.0,180.6 228.0,180.7 229.0,180.8 230.0,181.0 231.0,181.2 232.0,181.4 233.0,181.6 234.0,181.8 235.0,182.0 236.0,182.2 237.0,182.5 238.0,182.7 239.0,183.0 240.0,183.3 241.0,183.7 242.0,184.0 243.0,184.3 244.0,184.7 245.0,185.1 246.0,185.5 247.0,185.9 248.0,186.4 249.0,186.8 250.0,187.3 251.0,187.7 252.0,188.2 253.0,188.7 254.0,189.1 255.0,189.6 256.0,190.0 257.0,190.4 258.0,190.7 259.0,191.0 260.0,191.3 261.0,191.5 262.0,191.6 263.0,191.7 264.0,191.6 265.0,191.5 266.0,191.3 267.0,191.0 268.0,190.5 269.0,190.0 270.0,189.4 271.0,188.8 272.0,188.0 273.0,187.2 274.0,186.4 275.0,185.5 276.0,184.7 277.0,183.8 278.0,183.0 279.0,182.2 280.0,181.4 281.0,180.7 282.0,180.1 283.0,179.6 284.0,179.2 285.0,178.8 286.0,178.6 287.0,178.6 288.0,178.6 289.0,178.8 290.0,179.2 291.0,179.7 292.0,180.4 293.0,181.2 294.0,182.2 295.0,183.4 296.0,184.7 297.0,186.2 298.0,187.8 299.0,189.6 300.0,191.5 301.0,193.5 302.0,195.5 303.0,197.4 304.0,199.3 305.0,201.0 306.0,202.4 307.0,203.4 308.0,204.0 309.0,204.0 310.0,203.6 311.0,202.7 312.0,201.4 313.0,199.7 314.0,197.9 315.0,195.9 316.0,193.9 317.0,191.8 318.0,189.9 319.0,188.1 320.0,186.4 321.0,184.9 322.0,183.5 323.0,182.3 324.0,181.3 325.0,180.5 326.0,179.8 327.0,179.3 328.0,179.0 329.0,178.8 330.0,178.8 331.0,178.9 332.0,179.1 333.0,179.4 334.0,179.7 335.0,180.1 336.0,180.5 337.0,180.9 338.0,181.3 339.0,181.6 340.0,181.8 341.0,181.9 342.0,181.9 343.0,181.8 344.0,181.7 345.0,181.4 346.0,181.1 347.0,180.7 348.0,180.4 349.0,180.0 350.0,179.7 351.0,179.4 352.0,179.2 353.0,179.0 354.0,178.9 355.0,178.9 356.0,179.0 357.0,179.0 358.0,179.2 359.0,179.3 360.0,179.5 361.0,179.6 362.0,179.7 363.0,179.7 364.0,179.7 365.0,179.6 366.0,179.5 367.0,179.4 368.0,179.3 369.0,179.2 370.0,179.1 371.0,179.0 372.0,178.9 373.0,178.9 374.0,179.0 375.0,179.0 376.0,179.1 377.0,179.2 378.0,179.2 379.0,179.2 380.0,179.2 381.0,179.2 382.0,179.1 383.0,179.1 384.0,179.0 385.0,179.0 386.0,179.0 387.0,179.0 388.0,179.0 389.0,179.0 390.0,179.1 391.0,179.1 392.0,179.1 393.0,179.1 394.0,179.1 395.0,179.0 396.0,179.0 397.0,179.0 398.0,179.0 399.0,179.0 400.0,179.0 401.0,179.0 402.0,179.0 403.0,179.0 404.0,179.0 405.0,179.0 406.0,179.0 407.0,179.0 408.0,179.0 409.0,179.0 410.0,179.0 411.0,179.0 412.0,179.0 413.0,179.0 414.0,179.0 415.0,179.0 416.0,179.0 417.0,179.0 418.0,179.0 419.0,179.0 420.0,179.0 421.0,179.0 422.0,179.0 423.0,179.0 424.0,179.0 425.0,179.0 426.0,179.0 427.0,179.0 428.0,179.0 429.0,179.0 430.0,179.0 431.0,179.0 432.0,179.0 433.0,179.0 434.0,179.0 435.0,179.0 436.0,179.0 437.0,179.0 438.0,179.0 439.0,179.0 440.0,179.0 441.0,179.0 442.0,179.0 443.0,179.0 444.0,179.0 445.0,179.0 446.0,179.0 447.0,179.0 448.0,179.0 449.0,179.0 450.0,179.0 451.0,179.0 452.0,179.0 453.0,179.0 454.0,179.0 455.0,179.0 456.0,179.0 457.0,179.0 458.0,179.0 459.0,179.0 460.0,179.0 461.0,179.0 462.0,179.0 463.0,179.0 464.0,179.0 465.0,179.0 466.0,179.0 467.0,179.0 468.0,179.0 469.0,179.0 470.0,179.0 471.0,179.0 472.0,179.0 473.0,179.0 474.0,179.0 475.0,179.0 476.0,179.0 477.0,179.0 478.0,179.0 479.0,179.0 480.0,179.0 481.0,179.0 482.0,179.0 483.0,179.0"/>
<g font-family="Liberation Mono" font-size="9.5" letter-spacing="0.3" fill="#808080">
<text x="468" y="86.6" text-anchor="end">15ms</text>
<text x="468" y="116.6" text-anchor="end">10ms</text>
<text x="468" y="146.6" text-anchor="end">5ms</text>
<text x="468" y="176.6" text-anchor="end">+180</text>
<text x="468" y="206.6" text-anchor="end">+90</text>
<text x="468" y="236.6" text-anchor="end">0</text>
<text x="468" y="266.6" text-anchor="end">-90</text>
<text x="468" y="296.6" text-anchor="end">-180</text>
</g>
<rect x="500.5" y="52.5" width="479" height="314" fill="#fff" stroke="#646464"/>
<line x1="536" x2="969" y1="93.5" y2="93.5" stroke="#8c8c8c"/>
<line x1="536" x2="969" y1="121.5" y2="121.5" stroke="#8c8c8c"/>
<line x1="536" x2="969" y1="148.5" y2="148.5" stroke="#8c8c8c"/>
<line x1="536" x2="969" y1="176.5" y2="176.5" stroke="#8c8c8c"/>
<line x1="536" x2="969" y1="204.5" y2="204.5" stroke="#8c8c8c"/>
<line x1="536" x2="969" y1="231.5" y2="231.5" stroke="#8c8c8c"/>
<line x1="536" x2="969" y1="259.5" y2="259.5" stroke="#8c8c8c"/>
<line x1="536" x2="969" y1="286.5" y2="286.5" stroke="#8c8c8c"/>
<line x1="536" x2="969" y1="314.5" y2="314.5" stroke="#8c8c8c"/>
<line x1="542.5" x2="542.5" y1="89" y2="336" stroke="#8c8c8c"/>
<line x1="582.5" x2="582.5" y1="89" y2="336" stroke="#8c8c8c"/>
<line x1="623.5" x2="623.5" y1="89" y2="336" stroke="#8c8c8c"/>
<line x1="664.5" x2="664.5" y1="89" y2="336" stroke="#8c8c8c"/>
<line x1="705.5" x2="705.5" y1="89" y2="336" stroke="#8c8c8c"/>
<line x1="746.5" x2="746.5" y1="89" y2="336" stroke="#8c8c8c"/>
<line x1="787.5" x2="787.5" y1="89" y2="336" stroke="#8c8c8c"/>
<line x1="828.5" x2="828.5" y1="89" y2="336" stroke="#8c8c8c"/>
<line x1="869.5" x2="869.5" y1="89" y2="336" stroke="#8c8c8c"/>
<line x1="910.5" x2="910.5" y1="89" y2="336" stroke="#8c8c8c"/>
<line x1="951.5" x2="951.5" y1="89" y2="336" stroke="#8c8c8c"/>
<g font-family="Liberation Mono" font-size="9.5" letter-spacing="0.3" fill="#808080">
<text x="534.5" y="95.2" text-anchor="end">+100%</text>
<text x="528.5" y="122.8" text-anchor="end">+75%</text>
<text x="528.5" y="150.4" text-anchor="end">+50%</text>
<text x="528.5" y="178.1" text-anchor="end">+25%</text>
<text x="528.5" y="205.7" text-anchor="end">+0%</text>
<text x="528.5" y="233.3" text-anchor="end">-25%</text>
<text x="528.5" y="260.9" text-anchor="end">-50%</text>
<text x="528.5" y="288.6" text-anchor="end">-75%</text>
<text x="534.5" y="316.2" text-anchor="end">-100%</text>
<text x="536.8" y="348.3">0ms</text>
<text x="577.7" y="348.3">1ms</text>
<text x="618.6" y="348.3">2ms</text>
<text x="659.5" y="348.3">3ms</text>
<text x="700.4" y="348.3">4ms</text>
<text x="741.3" y="348.3">5ms</text>
<text x="782.2" y="348.3">6ms</text>
<text x="823.1" y="348.3">7ms</text>
<text x="864.0" y="348.3">8ms</text>
<text x="904.9" y="348.3">9ms</text>
<text x="939.8" y="348.3">10ms</text>
</g>
<text x="508" y="62" font-family="Liberation Mono" font-size="9.5" letter-spacing="0.3" fill="#000">HiFiAkademie - dspModul</text>
<polyline fill="none" stroke="#000080" stroke-width="1.15" shape-rendering="geometricPrecision" points="533.0,204.7 533.7,203.7 534.4,204.7 535.1,203.7 535.8,204.7 536.5,203.7 537.2,204.7 537.9,203.7 538.6,204.7 539.3,203.7 540.0,204.7 540.7,203.7 541.4,204.7 542.1,203.7 542.8,204.7 543.5,203.7 544.2,204.7 544.9,203.7 545.6,204.7 546.3,203.7 547.0,204.7 547.7,203.7 548.4,204.7 549.1,203.7 549.8,204.7 550.5,203.7 551.2,204.7 551.9,203.7 552.6,204.7 553.3,203.7 554.0,204.7 554.7,203.7 555.4,204.7 556.1,203.7 556.8,204.7 557.5,203.7 558.2,204.7 558.9,203.7 559.6,204.7 560.3,203.7 561.0,204.7 561.7,203.7 562.4,204.7 563.1,203.7 563.8,204.8 564.5,203.6 565.2,204.8 565.9,203.6 566.6,204.8 567.3,203.6 568.0,204.9 568.7,203.5 569.4,204.9 570.1,203.4 570.8,205.0 571.5,203.4 572.2,205.1 572.9,203.3 573.6,205.2 574.3,203.1 575.0,205.3 575.7,203.0 576.4,205.5 577.1,202.8 577.8,205.7 578.5,202.5 579.2,206.0 579.9,202.2 580.6,206.4 581.3,201.8 582.0,214.0 582.7,214.0 583.4,204.2 584.1,93.7 584.8,136.2 585.5,148.5 586.2,174.8 586.9,196.1 587.6,213.9 588.3,228.5 589.0,239.1 589.7,246.7 590.4,251.6 591.1,254.0 591.8,254.6 592.5,253.5 593.2,251.2 593.9,247.9 594.6,243.8 595.3,239.2 596.0,234.3 596.7,229.2 597.4,224.2 598.1,219.1 598.8,214.3 599.5,209.8 600.2,205.5 600.9,201.9 601.6,198.7 602.3,195.9 603.0,193.5 603.7,191.5 604.4,189.8 605.1,188.5 605.8,187.6 606.5,187.0 607.2,186.6 607.9,186.5 608.6,186.7 609.3,187.1 610.0,187.7 610.7,188.4 611.4,189.2 612.1,190.2 612.8,191.2 613.5,192.3 614.2,193.4 614.9,194.6 615.6,195.8 616.3,196.9 617.0,198.0 617.7,199.1 618.4,200.1 619.1,201.1 619.8,202.0 620.5,202.9 621.2,203.7 621.9,204.4 622.6,205.1 623.3,205.6 624.0,206.2 624.7,206.6 625.4,207.0 626.1,207.3 626.8,207.5 627.5,207.7 628.2,207.9 628.9,208.0 629.6,208.0 630.3,208.0 631.0,208.0 631.7,207.9 632.4,207.9 633.1,207.7 633.8,207.6 634.5,207.5 635.2,207.3 635.9,207.1 636.6,206.9 637.3,206.7 638.0,206.6 638.7,206.4 639.4,206.2 640.1,206.0 640.8,205.8 641.5,205.6 642.2,205.5 642.9,205.3 643.6,205.1 644.3,205.0 645.0,204.9 645.7,204.7 646.4,204.6 647.1,204.5 647.8,204.4 648.5,204.3 649.2,204.2 649.9,204.2 650.6,204.1 651.3,204.1 652.0,204.0 652.7,204.0 653.4,203.9 654.1,203.9 654.8,203.9 655.5,203.9 656.2,203.9 656.9,203.9 657.6,203.9 658.3,203.9 659.0,203.9 659.7,203.9 660.4,203.9 661.1,203.9 661.8,203.9 662.5,203.9 663.2,203.9 663.9,204.0 664.6,204.0 665.3,204.0 666.0,204.0 666.7,204.0 667.4,204.0 668.1,204.1 668.8,204.1 669.5,204.1 670.2,204.1 670.9,204.1 671.6,204.1 672.3,203.6 673.0,204.7 673.7,203.6 674.4,204.7 675.1,203.6 675.8,204.7 676.5,203.6 677.2,204.7 677.9,203.6 678.6,204.8 679.3,203.7 680.0,204.8 680.7,203.7 681.4,204.8 682.1,203.7 682.8,204.8 683.5,203.7 684.2,204.8 684.9,203.7 685.6,204.8 686.3,203.7 687.0,204.8 687.7,203.7 688.4,204.8 689.1,203.7 689.8,204.8 690.5,203.7 691.2,204.8 691.9,203.7 692.6,204.8 693.3,203.7 694.0,204.8 694.7,203.7 695.4,204.8 696.1,203.7 696.8,204.8 697.5,203.7 698.2,204.8 698.9,203.7 699.6,204.8 700.3,203.7 701.0,204.8 701.7,203.7 702.4,204.8 703.1,203.7 703.8,204.8 704.5,203.7 705.2,204.8 705.9,203.7 706.6,204.8 707.3,203.6 708.0,204.7 708.7,203.6 709.4,204.7 710.1,203.6 710.8,204.7 711.5,203.6 712.2,204.7 712.9,203.6 713.6,204.7 714.3,203.6 715.0,204.7 715.7,203.6 716.4,204.7 717.1,203.6 717.8,204.7 718.5,203.6 719.2,204.7 719.9,203.6 720.6,204.7 721.3,203.6 722.0,204.7 722.7,203.6 723.4,204.7 724.1,203.6 724.8,204.7 725.5,203.6 726.2,204.7 726.9,203.6 727.6,204.7 728.3,203.6 729.0,204.7 729.7,203.6 730.4,204.7 731.1,203.6 731.8,204.7 732.5,203.6 733.2,204.7 733.9,203.6 734.6,204.7 735.3,203.6 736.0,204.8 736.7,203.7 737.4,204.8 738.1,203.7 738.8,204.8 739.5,203.7 740.2,204.8 740.9,203.7 741.6,204.8 742.3,203.7 743.0,204.8 743.7,203.7 744.4,204.8 745.1,203.7 745.8,204.8 746.5,203.7 747.2,204.8 747.9,203.7 748.6,204.8 749.3,203.7 750.0,204.8 750.7,203.7 751.4,204.8 752.1,203.7 752.8,204.8 753.5,203.7 754.2,204.8 754.9,203.7 755.6,204.8 756.3,203.7 757.0,204.8 757.7,203.7 758.4,204.8 759.1,203.7 759.8,204.8 760.5,203.7 761.2,204.8 761.9,203.7 762.6,204.8 763.3,203.7 764.0,204.8 764.7,203.7 765.4,204.7 766.1,203.6 766.8,204.7 767.5,203.6 768.2,204.7 768.9,203.6 769.6,204.7 770.3,203.6 771.0,204.7 771.7,203.6 772.4,204.7 773.1,203.6 773.8,204.7 774.5,203.6 775.2,204.7 775.9,203.6 776.6,204.7 777.3,203.6 778.0,204.7 778.7,203.6 779.4,204.7 780.1,203.6 780.8,204.7 781.5,203.6 782.2,204.7 782.9,203.6 783.6,204.7 784.3,203.6 785.0,204.7 785.7,203.6 786.4,204.7 787.1,203.6 787.8,204.7 788.5,203.6 789.2,204.7 789.9,203.6 790.6,204.7 791.3,203.6 792.0,204.7 792.7,203.6 793.4,204.7 794.1,203.7 794.8,204.8 795.5,203.7 796.2,204.8 796.9,203.7 797.6,204.8 798.3,203.7 799.0,204.8 799.7,203.7 800.4,204.8 801.1,203.7 801.8,204.8 802.5,203.7 803.2,204.8 803.9,203.7 804.6,204.8 805.3,203.7 806.0,204.8 806.7,203.7 807.4,204.8 808.1,203.7 808.8,204.8 809.5,203.7 810.2,204.8 810.9,203.7 811.6,204.8 812.3,203.7 813.0,204.8 813.7,203.7 814.4,204.8 815.1,203.7 815.8,204.8 816.5,203.7 817.2,204.8 817.9,203.7 818.6,204.8 819.3,203.7 820.0,204.8 820.7,203.7 821.4,204.8 822.1,203.7 822.8,204.7 823.5,203.6 824.2,204.7 824.9,203.6 825.6,204.7 826.3,203.6 827.0,204.7 827.7,203.6 828.4,204.7 829.1,203.6 829.8,204.7 830.5,203.6 831.2,204.7 831.9,203.6 832.6,204.7 833.3,203.6 834.0,204.7 834.7,203.6 835.4,204.7 836.1,203.6 836.8,204.7 837.5,203.6 838.2,204.7 838.9,203.6 839.6,204.7 840.3,203.6 841.0,204.7 841.7,203.6 842.4,204.7 843.1,203.6 843.8,204.7 844.5,203.6 845.2,204.7 845.9,203.6 846.6,204.7 847.3,203.6 848.0,204.7 848.7,203.6 849.4,204.7 850.1,203.6 850.8,204.7 851.5,203.7 852.2,204.8 852.9,203.7 853.6,204.8 854.3,203.7 855.0,204.8 855.7,203.7 856.4,204.8 857.1,203.7 857.8,204.8 858.5,203.7 859.2,204.8 859.9,203.7 860.6,204.8 861.3,203.7 862.0,204.8 862.7,203.7 863.4,204.8 864.1,203.7 864.8,204.8 865.5,203.7 866.2,204.8 866.9,203.7 867.6,204.8 868.3,203.7 869.0,204.8 869.7,203.7 870.4,204.8 871.1,203.7 871.8,204.8 872.5,203.7 873.2,204.8 873.9,203.7 874.6,204.8 875.3,203.7 876.0,204.8 876.7,203.7 877.4,204.8 878.1,203.7 878.8,204.8 879.5,203.7 880.2,204.7 880.9,203.6 881.6,204.7 882.3,203.6 883.0,204.7 883.7,203.6 884.4,204.7 885.1,203.6 885.8,204.7 886.5,203.6 887.2,204.7 887.9,203.6 888.6,204.7 889.3,203.6 890.0,204.7 890.7,203.6 891.4,204.7 892.1,203.6 892.8,204.7 893.5,203.6 894.2,204.7 894.9,203.6 895.6,204.7 896.3,203.6 897.0,204.7 897.7,203.6 898.4,204.7 899.1,203.6 899.8,204.7 900.5,203.6 901.2,204.7 901.9,203.6 902.6,204.7 903.3,203.6 904.0,204.7 904.7,203.6 905.4,204.7 906.1,203.6 906.8,204.7 907.5,203.6 908.2,204.7 908.9,203.6 909.6,204.8 910.3,203.7 911.0,204.8 911.7,203.7 912.4,204.8 913.1,203.7 913.8,204.8 914.5,203.7 915.2,204.8 915.9,203.7 916.6,204.8 917.3,203.7 918.0,204.8 918.7,203.7 919.4,204.8 920.1,203.7 920.8,204.8 921.5,203.7 922.2,204.8 922.9,203.7 923.6,204.8 924.3,203.7 925.0,204.8 925.7,203.7 926.4,204.8 927.1,203.7 927.8,204.8 928.5,203.7 929.2,204.8 929.9,203.7 930.6,204.8 931.3,203.7 932.0,204.8 932.7,203.7 933.4,204.8 934.1,203.6 934.8,204.8 935.5,203.7 936.2,204.8 936.9,203.7 937.6,204.8 938.3,203.6 939.0,204.7 939.7,203.6 940.4,204.7 941.1,203.6 941.8,204.8 942.5,203.7 943.2,204.7 943.9,203.6 944.6,204.7 945.3,203.6 946.0,204.7 946.7,203.7 947.4,204.8 948.1,203.6 948.8,204.7 949.5,203.6 950.2,204.7 950.9,203.6 951.6,204.8 952.3,203.7 953.0,204.8 953.7,203.6 954.4,204.7 955.1,203.6 955.8,204.7 956.5,203.7 957.2,204.8 957.9,203.7 958.6,204.8 959.3,203.6 960.0,204.7 960.7,203.6 961.4,204.8 962.1,203.7 962.8,204.8 963.5,203.7 964.2,204.7 964.9,203.6 965.6,204.7 966.3,203.6 967.0,204.8 967.7,203.7 968.4,204.8"/>
</svg>
<svg class="a" style="left:2px;top:6px" width="14" height="7"><rect x="0" y="0" width="14" height="7" fill="#000"/><rect x="1" y="1" width="12" height="5" fill="#c85a78"/><rect x="3" y="2" width="7" height="3" fill="#8f8f80"/></svg><div class="a" style="left:22.5px;top:4px;font-size:12.2px;line-height:14px;color:#999">dspModul - Kein dspModul</div><div class="a" style="left:5px;top:27px;font-size:11.5px;line-height:14px;color:#222">Datei</div><div class="a" style="left:47px;top:27px;font-size:11.5px;line-height:14px;color:#222">Option</div><div class="a" style="left:96px;top:27px;font-size:11.5px;line-height:14px;color:#222">?</div><svg class="a" style="left:860px;top:0" width="122" height="22"><line x1="7.5" x2="18" y1="11.5" y2="11.5" stroke="#666" stroke-width="1"/><rect x="53.5" y="6.5" width="9" height="9" fill="none" stroke="#d6d6d6"/><path d="M99,6 L109,16 M109,6 L99,16" stroke="#555" stroke-width="1"/></svg>
<div class="a" style="left:5px;top:372px;font-size:11px;line-height:13px;color:#000">Anzeige</div><div class="a" style="left:5px;top:387px;width:240px;height:21px;background:#e1e1e1;border:1px solid #adadad"></div><div class="a" style="left:10px;top:391.0px;font-size:10.6px;line-height:13px">Mono: Pegel, Phase, Laufzeit</div><svg class="a" style="left:232px;top:395.5px" width="9" height="6"><polyline points="0.2,0.9 4.0,4.6 7.8,0.9" fill="none" stroke="#404040" stroke-width="1.05"/></svg><div class="a" style="left:269px;top:372px;font-size:11px;line-height:13px;color:#000">Offset</div><div class="a" style="left:269px;top:386px;width:60px;height:21px;background:#fff;border:1px solid #7a7a7a;border-right-color:#b4b4b4"></div><div class="a" style="left:278px;top:390.0px;font-size:10.5px;line-height:13px">0.0</div><div class="a" style="left:311.5px;top:387.5px;width:15.5px;height:8.5px;background:#e9e9e9;border:1px solid #b0b0b0"></div><div class="a" style="left:311.5px;top:397.0px;width:15.5px;height:8px;background:#e9e9e9;border:1px solid #b0b0b0"></div><svg class="a" style="left:311.5px;top:387.5px" width="15" height="19"><polygon points="4.6,4.8 7.35,2.0 10.1,4.8" fill="#000"/><polygon points="4.6,11.4 10.1,11.4 7.35,14.2" fill="#000"/></svg><div class="a" style="left:338px;top:372px;font-size:11px;line-height:13px;color:#000">Smooth</div><div class="a" style="left:338px;top:387px;width:60px;height:21px;background:#e1e1e1;border:1px solid #adadad"></div><div class="a" style="left:343px;top:391.0px;font-size:11px;line-height:13px">1/48</div><svg class="a" style="left:385px;top:395.5px" width="9" height="6"><polyline points="0.2,0.9 4.0,4.6 7.8,0.9" fill="none" stroke="#404040" stroke-width="1.05"/></svg><div class="a" style="left:411px;top:387px;width:73px;height:21px;background:#e1e1e1;border:1px solid #adadad;font-size:11px;line-height:19px;text-align:center;color:#000">Anzeigen</div><div class="a" style="left:8px;top:414px;font-size:11px;line-height:13px;color:#000">Filter</div><div class="a" style="left:122px;top:414px;font-size:11px;line-height:13px;color:#000">Fc (Hz)</div><div class="a" style="left:194px;top:414px;font-size:11px;line-height:13px;color:#000">Qc</div><div class="a" style="left:260px;top:414px;font-size:11px;line-height:13px;color:#000">Pegel (dB)</div><div class="a" style="left:326px;top:414px;font-size:11px;line-height:13px;color:#000">Fp (Hz)</div><div class="a" style="left:398px;top:414px;font-size:11px;line-height:13px;color:#000">Qp</div><div class="a" style="left:14px;top:434.5px;font-size:11px;line-height:13px;color:#000">1</div><div class="a" style="left:26px;top:430px;width:90px;height:22px;background:#e1e1e1;border:1px solid #adadad"></div><div class="a" style="left:31px;top:434.5px;font-size:10.7px;line-height:13px">TiefPass</div><svg class="a" style="left:103px;top:439.0px" width="9" height="6"><polyline points="0.2,0.9 4.0,4.6 7.8,0.9" fill="none" stroke="#404040" stroke-width="1.05"/></svg><div class="a" style="left:122px;top:430px;width:69px;height:21px;background:#fff;border:1px solid #7a7a7a;border-right-color:#b4b4b4"></div><div class="a" style="left:135px;top:434.0px;font-size:10.5px;line-height:13px">1000.0</div><div class="a" style="left:173.5px;top:431.5px;width:15.5px;height:8.5px;background:#e9e9e9;border:1px solid #b0b0b0"></div><div class="a" style="left:173.5px;top:441.0px;width:15.5px;height:8px;background:#e9e9e9;border:1px solid #b0b0b0"></div><svg class="a" style="left:173.5px;top:431.5px" width="15" height="19"><polygon points="4.6,4.8 7.35,2.0 10.1,4.8" fill="#000"/><polygon points="4.6,11.4 10.1,11.4 7.35,14.2" fill="#000"/></svg><div class="a" style="left:194px;top:430px;width:63px;height:21px;background:#fff;border:1px solid #7a7a7a;border-right-color:#b4b4b4"></div><div class="a" style="left:203px;top:434.0px;font-size:10.5px;line-height:13px">0.710</div><div class="a" style="left:239.5px;top:431.5px;width:15.5px;height:8.5px;background:#e9e9e9;border:1px solid #b0b0b0"></div><div class="a" style="left:239.5px;top:441.0px;width:15.5px;height:8px;background:#e9e9e9;border:1px solid #b0b0b0"></div><svg class="a" style="left:239.5px;top:431.5px" width="15" height="19"><polygon points="4.6,4.8 7.35,2.0 10.1,4.8" fill="#000"/><polygon points="4.6,11.4 10.1,11.4 7.35,14.2" fill="#000"/></svg><div class="a" style="left:260px;top:430px;width:60px;height:21px;background:#fff;border:1px solid #7a7a7a;border-right-color:#b4b4b4"></div><div class="a" style="left:269px;top:434.0px;font-size:10.5px;line-height:13px">0.0</div><div class="a" style="left:302.5px;top:431.5px;width:15.5px;height:8.5px;background:#e9e9e9;border:1px solid #b0b0b0"></div><div class="a" style="left:302.5px;top:441.0px;width:15.5px;height:8px;background:#e9e9e9;border:1px solid #b0b0b0"></div><svg class="a" style="left:302.5px;top:431.5px" width="15" height="19"><polygon points="4.6,4.8 7.35,2.0 10.1,4.8" fill="#000"/><polygon points="4.6,11.4 10.1,11.4 7.35,14.2" fill="#000"/></svg><div class="a" style="left:326px;top:430px;width:69px;height:21px;background:#fff;border:1px solid #7a7a7a;border-right-color:#b4b4b4"></div><div class="a" style="left:377.5px;top:431.5px;width:15.5px;height:8.5px;background:#e9e9e9;border:1px solid #b0b0b0"></div><div class="a" style="left:377.5px;top:441.0px;width:15.5px;height:8px;background:#e9e9e9;border:1px solid #b0b0b0"></div><svg class="a" style="left:377.5px;top:431.5px" width="15" height="19"><polygon points="4.6,4.8 7.35,2.0 10.1,4.8" fill="#000"/><polygon points="4.6,11.4 10.1,11.4 7.35,14.2" fill="#000"/></svg><div class="a" style="left:398px;top:430px;width:63px;height:21px;background:#fff;border:1px solid #7a7a7a;border-right-color:#b4b4b4"></div><div class="a" style="left:443.5px;top:431.5px;width:15.5px;height:8.5px;background:#e9e9e9;border:1px solid #b0b0b0"></div><div class="a" style="left:443.5px;top:441.0px;width:15.5px;height:8px;background:#e9e9e9;border:1px solid #b0b0b0"></div><svg class="a" style="left:443.5px;top:431.5px" width="15" height="19"><polygon points="4.6,4.8 7.35,2.0 10.1,4.8" fill="#000"/><polygon points="4.6,11.4 10.1,11.4 7.35,14.2" fill="#000"/></svg><div class="a" style="left:14px;top:459.5px;font-size:11px;line-height:13px;color:#000">2</div><div class="a" style="left:26px;top:455px;width:90px;height:22px;background:#e1e1e1;border:1px solid #adadad"></div><div class="a" style="left:31px;top:459.5px;font-size:10.7px;line-height:13px">TiefPass</div><svg class="a" style="left:103px;top:464.0px" width="9" height="6"><polyline points="0.2,0.9 4.0,4.6 7.8,0.9" fill="none" stroke="#404040" stroke-width="1.05"/></svg><div class="a" style="left:122px;top:455px;width:69px;height:21px;background:#fff;border:1px solid #7a7a7a;border-right-color:#b4b4b4"></div><div class="a" style="left:135px;top:459.0px;font-size:10.5px;line-height:13px">1000.0</div><div class="a" style="left:173.5px;top:456.5px;width:15.5px;height:8.5px;background:#e9e9e9;border:1px solid #b0b0b0"></div><div class="a" style="left:173.5px;top:466.0px;width:15.5px;height:8px;background:#e9e9e9;border:1px solid #b0b0b0"></div><svg class="a" style="left:173.5px;top:456.5px" width="15" height="19"><polygon points="4.6,4.8 7.35,2.0 10.1,4.8" fill="#000"/><polygon points="4.6,11.4 10.1,11.4 7.35,14.2" fill="#000"/></svg><div class="a" style="left:194px;top:455px;width:63px;height:21px;background:#fff;border:1px solid #7a7a7a;border-right-color:#b4b4b4"></div><div class="a" style="left:203px;top:459.0px;font-size:10.5px;line-height:13px">0.710</div><div class="a" style="left:239.5px;top:456.5px;width:15.5px;height:8.5px;background:#e9e9e9;border:1px solid #b0b0b0"></div><div class="a" style="left:239.5px;top:466.0px;width:15.5px;height:8px;background:#e9e9e9;border:1px solid #b0b0b0"></div><svg class="a" style="left:239.5px;top:456.5px" width="15" height="19"><polygon points="4.6,4.8 7.35,2.0 10.1,4.8" fill="#000"/><polygon points="4.6,11.4 10.1,11.4 7.35,14.2" fill="#000"/></svg><div class="a" style="left:260px;top:455px;width:60px;height:21px;background:#fff;border:1px solid #7a7a7a;border-right-color:#b4b4b4"></div><div class="a" style="left:269px;top:459.0px;font-size:10.5px;line-height:13px">0.0</div><div class="a" style="left:302.5px;top:456.5px;width:15.5px;height:8.5px;background:#e9e9e9;border:1px solid #b0b0b0"></div><div class="a" style="left:302.5px;top:466.0px;width:15.5px;height:8px;background:#e9e9e9;border:1px solid #b0b0b0"></div><svg class="a" style="left:302.5px;top:456.5px" width="15" height="19"><polygon points="4.6,4.8 7.35,2.0 10.1,4.8" fill="#000"/><polygon points="4.6,11.4 10.1,11.4 7.35,14.2" fill="#000"/></svg><div class="a" style="left:326px;top:455px;width:69px;height:21px;background:#fff;border:1px solid #7a7a7a;border-right-color:#b4b4b4"></div><div class="a" style="left:377.5px;top:456.5px;width:15.5px;height:8.5px;background:#e9e9e9;border:1px solid #b0b0b0"></div><div class="a" style="left:377.5px;top:466.0px;width:15.5px;height:8px;background:#e9e9e9;border:1px solid #b0b0b0"></div><svg class="a" style="left:377.5px;top:456.5px" width="15" height="19"><polygon points="4.6,4.8 7.35,2.0 10.1,4.8" fill="#000"/><polygon points="4.6,11.4 10.1,11.4 7.35,14.2" fill="#000"/></svg><div class="a" style="left:398px;top:455px;width:63px;height:21px;background:#fff;border:1px solid #7a7a7a;border-right-color:#b4b4b4"></div><div class="a" style="left:443.5px;top:456.5px;width:15.5px;height:8.5px;background:#e9e9e9;border:1px solid #b0b0b0"></div><div class="a" style="left:443.5px;top:466.0px;width:15.5px;height:8px;background:#e9e9e9;border:1px solid #b0b0b0"></div><svg class="a" style="left:443.5px;top:456.5px" width="15" height="19"><polygon points="4.6,4.8 7.35,2.0 10.1,4.8" fill="#000"/><polygon points="4.6,11.4 10.1,11.4 7.35,14.2" fill="#000"/></svg><div class="a" style="left:14px;top:483.5px;font-size:11px;line-height:13px;color:#000">3</div><div class="a" style="left:26px;top:479px;width:90px;height:22px;background:#e1e1e1;border:1px solid #adadad"></div><div class="a" style="left:31px;top:483.5px;font-size:10.8px;line-height:13px">unbenutzt</div><svg class="a" style="left:103px;top:488.0px" width="9" height="6"><polyline points="0.2,0.9 4.0,4.6 7.8,0.9" fill="none" stroke="#404040" stroke-width="1.05"/></svg><div class="a" style="left:122px;top:479px;width:69px;height:21px;background:#fff;border:1px solid #7a7a7a;border-right-color:#b4b4b4"></div><div class="a" style="left:173.5px;top:480.5px;width:15.5px;height:8.5px;background:#e9e9e9;border:1px solid #b0b0b0"></div><div class="a" style="left:173.5px;top:490.0px;width:15.5px;height:8px;background:#e9e9e9;border:1px solid #b0b0b0"></div><svg class="a" style="left:173.5px;top:480.5px" width="15" height="19"><polygon points="4.6,4.8 7.35,2.0 10.1,4.8" fill="#000"/><polygon points="4.6,11.4 10.1,11.4 7.35,14.2" fill="#000"/></svg><div class="a" style="left:194px;top:479px;width:63px;height:21px;background:#fff;border:1px solid #7a7a7a;border-right-color:#b4b4b4"></div><div class="a" style="left:239.5px;top:480.5px;width:15.5px;height:8.5px;background:#e9e9e9;border:1px solid #b0b0b0"></div><div class="a" style="left:239.5px;top:490.0px;width:15.5px;height:8px;background:#e9e9e9;border:1px solid #b0b0b0"></div><svg class="a" style="left:239.5px;top:480.5px" width="15" height="19"><polygon points="4.6,4.8 7.35,2.0 10.1,4.8" fill="#000"/><polygon points="4.6,11.4 10.1,11.4 7.35,14.2" fill="#000"/></svg><div class="a" style="left:260px;top:479px;width:60px;height:21px;background:#fff;border:1px solid #7a7a7a;border-right-color:#b4b4b4"></div><div class="a" style="left:302.5px;top:480.5px;width:15.5px;height:8.5px;background:#e9e9e9;border:1px solid #b0b0b0"></div><div class="a" style="left:302.5px;top:490.0px;width:15.5px;height:8px;background:#e9e9e9;border:1px solid #b0b0b0"></div><svg class="a" style="left:302.5px;top:480.5px" width="15" height="19"><polygon points="4.6,4.8 7.35,2.0 10.1,4.8" fill="#000"/><polygon points="4.6,11.4 10.1,11.4 7.35,14.2" fill="#000"/></svg><div class="a" style="left:326px;top:479px;width:69px;height:21px;background:#fff;border:1px solid #7a7a7a;border-right-color:#b4b4b4"></div><div class="a" style="left:377.5px;top:480.5px;width:15.5px;height:8.5px;background:#e9e9e9;border:1px solid #b0b0b0"></div><div class="a" style="left:377.5px;top:490.0px;width:15.5px;height:8px;background:#e9e9e9;border:1px solid #b0b0b0"></div><svg class="a" style="left:377.5px;top:480.5px" width="15" height="19"><polygon points="4.6,4.8 7.35,2.0 10.1,4.8" fill="#000"/><polygon points="4.6,11.4 10.1,11.4 7.35,14.2" fill="#000"/></svg><div class="a" style="left:398px;top:479px;width:63px;height:21px;background:#fff;border:1px solid #7a7a7a;border-right-color:#b4b4b4"></div><div class="a" style="left:443.5px;top:480.5px;width:15.5px;height:8.5px;background:#e9e9e9;border:1px solid #b0b0b0"></div><div class="a" style="left:443.5px;top:490.0px;width:15.5px;height:8px;background:#e9e9e9;border:1px solid #b0b0b0"></div><svg class="a" style="left:443.5px;top:480.5px" width="15" height="19"><polygon points="4.6,4.8 7.35,2.0 10.1,4.8" fill="#000"/><polygon points="4.6,11.4 10.1,11.4 7.35,14.2" fill="#000"/></svg><div class="a" style="left:14px;top:508.5px;font-size:11px;line-height:13px;color:#000">4</div><div class="a" style="left:26px;top:504px;width:90px;height:22px;background:#e1e1e1;border:1px solid #adadad"></div><div class="a" style="left:31px;top:508.5px;font-size:10.8px;line-height:13px">unbenutzt</div><svg class="a" style="left:103px;top:513.0px" width="9" height="6"><polyline points="0.2,0.9 4.0,4.6 7.8,0.9" fill="none" stroke="#404040" stroke-width="1.05"/></svg><div class="a" style="left:122px;top:504px;width:69px;height:21px;background:#fff;border:1px solid #7a7a7a;border-right-color:#b4b4b4"></div><div class="a" style="left:173.5px;top:505.5px;width:15.5px;height:8.5px;background:#e9e9e9;border:1px solid #b0b0b0"></div><div class="a" style="left:173.5px;top:515.0px;width:15.5px;height:8px;background:#e9e9e9;border:1px solid #b0b0b0"></div><svg class="a" style="left:173.5px;top:505.5px" width="15" height="19"><polygon points="4.6,4.8 7.35,2.0 10.1,4.8" fill="#000"/><polygon points="4.6,11.4 10.1,11.4 7.35,14.2" fill="#000"/></svg><div class="a" style="left:194px;top:504px;width:63px;height:21px;background:#fff;border:1px solid #7a7a7a;border-right-color:#b4b4b4"></div><div class="a" style="left:239.5px;top:505.5px;width:15.5px;height:8.5px;background:#e9e9e9;border:1px solid #b0b0b0"></div><div class="a" style="left:239.5px;top:515.0px;width:15.5px;height:8px;background:#e9e9e9;border:1px solid #b0b0b0"></div><svg class="a" style="left:239.5px;top:505.5px" width="15" height="19"><polygon points="4.6,4.8 7.35,2.0 10.1,4.8" fill="#000"/><polygon points="4.6,11.4 10.1,11.4 7.35,14.2" fill="#000"/></svg><div class="a" style="left:260px;top:504px;width:60px;height:21px;background:#fff;border:1px solid #7a7a7a;border-right-color:#b4b4b4"></div><div class="a" style="left:302.5px;top:505.5px;width:15.5px;height:8.5px;background:#e9e9e9;border:1px solid #b0b0b0"></div><div class="a" style="left:302.5px;top:515.0px;width:15.5px;height:8px;background:#e9e9e9;border:1px solid #b0b0b0"></div><svg class="a" style="left:302.5px;top:505.5px" width="15" height="19"><polygon points="4.6,4.8 7.35,2.0 10.1,4.8" fill="#000"/><polygon points="4.6,11.4 10.1,11.4 7.35,14.2" fill="#000"/></svg><div class="a" style="left:326px;top:504px;width:69px;height:21px;background:#fff;border:1px solid #7a7a7a;border-right-color:#b4b4b4"></div><div class="a" style="left:377.5px;top:505.5px;width:15.5px;height:8.5px;background:#e9e9e9;border:1px solid #b0b0b0"></div><div class="a" style="left:377.5px;top:515.0px;width:15.5px;height:8px;background:#e9e9e9;border:1px solid #b0b0b0"></div><svg class="a" style="left:377.5px;top:505.5px" width="15" height="19"><polygon points="4.6,4.8 7.35,2.0 10.1,4.8" fill="#000"/><polygon points="4.6,11.4 10.1,11.4 7.35,14.2" fill="#000"/></svg><div class="a" style="left:398px;top:504px;width:63px;height:21px;background:#fff;border:1px solid #7a7a7a;border-right-color:#b4b4b4"></div><div class="a" style="left:443.5px;top:505.5px;width:15.5px;height:8.5px;background:#e9e9e9;border:1px solid #b0b0b0"></div><div class="a" style="left:443.5px;top:515.0px;width:15.5px;height:8px;background:#e9e9e9;border:1px solid #b0b0b0"></div><svg class="a" style="left:443.5px;top:505.5px" width="15" height="19"><polygon points="4.6,4.8 7.35,2.0 10.1,4.8" fill="#000"/><polygon points="4.6,11.4 10.1,11.4 7.35,14.2" fill="#000"/></svg><div class="a" style="left:14px;top:532.5px;font-size:11px;line-height:13px;color:#000">5</div><div class="a" style="left:26px;top:528px;width:90px;height:22px;background:#e1e1e1;border:1px solid #adadad"></div><div class="a" style="left:31px;top:532.5px;font-size:10.8px;line-height:13px">unbenutzt</div><svg class="a" style="left:103px;top:537.0px" width="9" height="6"><polyline points="0.2,0.9 4.0,4.6 7.8,0.9" fill="none" stroke="#404040" stroke-width="1.05"/></svg><div class="a" style="left:122px;top:528px;width:69px;height:21px;background:#fff;border:1px solid #7a7a7a;border-right-color:#b4b4b4"></div><div class="a" style="left:173.5px;top:529.5px;width:15.5px;height:8.5px;background:#e9e9e9;border:1px solid #b0b0b0"></div><div class="a" style="left:173.5px;top:539.0px;width:15.5px;height:8px;background:#e9e9e9;border:1px solid #b0b0b0"></div><svg class="a" style="left:173.5px;top:529.5px" width="15" height="19"><polygon points="4.6,4.8 7.35,2.0 10.1,4.8" fill="#000"/><polygon points="4.6,11.4 10.1,11.4 7.35,14.2" fill="#000"/></svg><div class="a" style="left:194px;top:528px;width:63px;height:21px;background:#fff;border:1px solid #7a7a7a;border-right-color:#b4b4b4"></div><div class="a" style="left:239.5px;top:529.5px;width:15.5px;height:8.5px;background:#e9e9e9;border:1px solid #b0b0b0"></div><div class="a" style="left:239.5px;top:539.0px;width:15.5px;height:8px;background:#e9e9e9;border:1px solid #b0b0b0"></div><svg class="a" style="left:239.5px;top:529.5px" width="15" height="19"><polygon points="4.6,4.8 7.35,2.0 10.1,4.8" fill="#000"/><polygon points="4.6,11.4 10.1,11.4 7.35,14.2" fill="#000"/></svg><div class="a" style="left:260px;top:528px;width:60px;height:21px;background:#fff;border:1px solid #7a7a7a;border-right-color:#b4b4b4"></div><div class="a" style="left:302.5px;top:529.5px;width:15.5px;height:8.5px;background:#e9e9e9;border:1px solid #b0b0b0"></div><div class="a" style="left:302.5px;top:539.0px;width:15.5px;height:8px;background:#e9e9e9;border:1px solid #b0b0b0"></div><svg class="a" style="left:302.5px;top:529.5px" width="15" height="19"><polygon points="4.6,4.8 7.35,2.0 10.1,4.8" fill="#000"/><polygon points="4.6,11.4 10.1,11.4 7.35,14.2" fill="#000"/></svg><div class="a" style="left:326px;top:528px;width:69px;height:21px;background:#fff;border:1px solid #7a7a7a;border-right-color:#b4b4b4"></div><div class="a" style="left:377.5px;top:529.5px;width:15.5px;height:8.5px;background:#e9e9e9;border:1px solid #b0b0b0"></div><div class="a" style="left:377.5px;top:539.0px;width:15.5px;height:8px;background:#e9e9e9;border:1px solid #b0b0b0"></div><svg class="a" style="left:377.5px;top:529.5px" width="15" height="19"><polygon points="4.6,4.8 7.35,2.0 10.1,4.8" fill="#000"/><polygon points="4.6,11.4 10.1,11.4 7.35,14.2" fill="#000"/></svg><div class="a" style="left:398px;top:528px;width:63px;height:21px;background:#fff;border:1px solid #7a7a7a;border-right-color:#b4b4b4"></div><div class="a" style="left:443.5px;top:529.5px;width:15.5px;height:8.5px;background:#e9e9e9;border:1px solid #b0b0b0"></div><div class="a" style="left:443.5px;top:539.0px;width:15.5px;height:8px;background:#e9e9e9;border:1px solid #b0b0b0"></div><svg class="a" style="left:443.5px;top:529.5px" width="15" height="19"><polygon points="4.6,4.8 7.35,2.0 10.1,4.8" fill="#000"/><polygon points="4.6,11.4 10.1,11.4 7.35,14.2" fill="#000"/></svg><div class="a" style="left:14px;top:557.5px;font-size:11px;line-height:13px;color:#000">6</div><div class="a" style="left:26px;top:553px;width:90px;height:22px;background:#e1e1e1;border:1px solid #adadad"></div><div class="a" style="left:31px;top:557.5px;font-size:10.8px;line-height:13px">unbenutzt</div><svg class="a" style="left:103px;top:562.0px" width="9" height="6"><polyline points="0.2,0.9 4.0,4.6 7.8,0.9" fill="none" stroke="#404040" stroke-width="1.05"/></svg><div class="a" style="left:122px;top:553px;width:69px;height:21px;background:#fff;border:1px solid #7a7a7a;border-right-color:#b4b4b4"></div><div class="a" style="left:173.5px;top:554.5px;width:15.5px;height:8.5px;background:#e9e9e9;border:1px solid #b0b0b0"></div><div class="a" style="left:173.5px;top:564.0px;width:15.5px;height:8px;background:#e9e9e9;border:1px solid #b0b0b0"></div><svg class="a" style="left:173.5px;top:554.5px" width="15" height="19"><polygon points="4.6,4.8 7.35,2.0 10.1,4.8" fill="#000"/><polygon points="4.6,11.4 10.1,11.4 7.35,14.2" fill="#000"/></svg><div class="a" style="left:194px;top:553px;width:63px;height:21px;background:#fff;border:1px solid #7a7a7a;border-right-color:#b4b4b4"></div><div class="a" style="left:239.5px;top:554.5px;width:15.5px;height:8.5px;background:#e9e9e9;border:1px solid #b0b0b0"></div><div class="a" style="left:239.5px;top:564.0px;width:15.5px;height:8px;background:#e9e9e9;border:1px solid #b0b0b0"></div><svg class="a" style="left:239.5px;top:554.5px" width="15" height="19"><polygon points="4.6,4.8 7.35,2.0 10.1,4.8" fill="#000"/><polygon points="4.6,11.4 10.1,11.4 7.35,14.2" fill="#000"/></svg><div class="a" style="left:260px;top:553px;width:60px;height:21px;background:#fff;border:1px solid #7a7a7a;border-right-color:#b4b4b4"></div><div class="a" style="left:302.5px;top:554.5px;width:15.5px;height:8.5px;background:#e9e9e9;border:1px solid #b0b0b0"></div><div class="a" style="left:302.5px;top:564.0px;width:15.5px;height:8px;background:#e9e9e9;border:1px solid #b0b0b0"></div><svg class="a" style="left:302.5px;top:554.5px" width="15" height="19"><polygon points="4.6,4.8 7.35,2.0 10.1,4.8" fill="#000"/><polygon points="4.6,11.4 10.1,11.4 7.35,14.2" fill="#000"/></svg><div class="a" style="left:326px;top:553px;width:69px;height:21px;background:#fff;border:1px solid #7a7a7a;border-right-color:#b4b4b4"></div><div class="a" style="left:377.5px;top:554.5px;width:15.5px;height:8.5px;background:#e9e9e9;border:1px solid #b0b0b0"></div><div class="a" style="left:377.5px;top:564.0px;width:15.5px;height:8px;background:#e9e9e9;border:1px solid #b0b0b0"></div><svg class="a" style="left:377.5px;top:554.5px" width="15" height="19"><polygon points="4.6,4.8 7.35,2.0 10.1,4.8" fill="#000"/><polygon points="4.6,11.4 10.1,11.4 7.35,14.2" fill="#000"/></svg><div class="a" style="left:398px;top:553px;width:63px;height:21px;background:#fff;border:1px solid #7a7a7a;border-right-color:#b4b4b4"></div><div class="a" style="left:443.5px;top:554.5px;width:15.5px;height:8.5px;background:#e9e9e9;border:1px solid #b0b0b0"></div><div class="a" style="left:443.5px;top:564.0px;width:15.5px;height:8px;background:#e9e9e9;border:1px solid #b0b0b0"></div><svg class="a" style="left:443.5px;top:554.5px" width="15" height="19"><polygon points="4.6,4.8 7.35,2.0 10.1,4.8" fill="#000"/><polygon points="4.6,11.4 10.1,11.4 7.35,14.2" fill="#000"/></svg><div class="a" style="left:14px;top:581.5px;font-size:11px;line-height:13px;color:#000">7</div><div class="a" style="left:26px;top:577px;width:90px;height:22px;background:#e1e1e1;border:1px solid #adadad"></div><div class="a" style="left:31px;top:581.5px;font-size:10.8px;line-height:13px">unbenutzt</div><svg class="a" style="left:103px;top:586.0px" width="9" height="6"><polyline points="0.2,0.9 4.0,4.6 7.8,0.9" fill="none" stroke="#404040" stroke-width="1.05"/></svg><div class="a" style="left:122px;top:577px;width:69px;height:21px;background:#fff;border:1px solid #7a7a7a;border-right-color:#b4b4b4"></div><div class="a" style="left:173.5px;top:578.5px;width:15.5px;height:8.5px;background:#e9e9e9;border:1px solid #b0b0b0"></div><div class="a" style="left:173.5px;top:588.0px;width:15.5px;height:8px;background:#e9e9e9;border:1px solid #b0b0b0"></div><svg class="a" style="left:173.5px;top:578.5px" width="15" height="19"><polygon points="4.6,4.8 7.35,2.0 10.1,4.8" fill="#000"/><polygon points="4.6,11.4 10.1,11.4 7.35,14.2" fill="#000"/></svg><div class="a" style="left:194px;top:577px;width:63px;height:21px;background:#fff;border:1px solid #7a7a7a;border-right-color:#b4b4b4"></div><div class="a" style="left:239.5px;top:578.5px;width:15.5px;height:8.5px;background:#e9e9e9;border:1px solid #b0b0b0"></div><div class="a" style="left:239.5px;top:588.0px;width:15.5px;height:8px;background:#e9e9e9;border:1px solid #b0b0b0"></div><svg class="a" style="left:239.5px;top:578.5px" width="15" height="19"><polygon points="4.6,4.8 7.35,2.0 10.1,4.8" fill="#000"/><polygon points="4.6,11.4 10.1,11.4 7.35,14.2" fill="#000"/></svg><div class="a" style="left:260px;top:577px;width:60px;height:21px;background:#fff;border:1px solid #7a7a7a;border-right-color:#b4b4b4"></div><div class="a" style="left:302.5px;top:578.5px;width:15.5px;height:8.5px;background:#e9e9e9;border:1px solid #b0b0b0"></div><div class="a" style="left:302.5px;top:588.0px;width:15.5px;height:8px;background:#e9e9e9;border:1px solid #b0b0b0"></div><svg class="a" style="left:302.5px;top:578.5px" width="15" height="19"><polygon points="4.6,4.8 7.35,2.0 10.1,4.8" fill="#000"/><polygon points="4.6,11.4 10.1,11.4 7.35,14.2" fill="#000"/></svg><div class="a" style="left:326px;top:577px;width:69px;height:21px;background:#fff;border:1px solid #7a7a7a;border-right-color:#b4b4b4"></div><div class="a" style="left:377.5px;top:578.5px;width:15.5px;height:8.5px;background:#e9e9e9;border:1px solid #b0b0b0"></div><div class="a" style="left:377.5px;top:588.0px;width:15.5px;height:8px;background:#e9e9e9;border:1px solid #b0b0b0"></div><svg class="a" style="left:377.5px;top:578.5px" width="15" height="19"><polygon points="4.6,4.8 7.35,2.0 10.1,4.8" fill="#000"/><polygon points="4.6,11.4 10.1,11.4 7.35,14.2" fill="#000"/></svg><div class="a" style="left:398px;top:577px;width:63px;height:21px;background:#fff;border:1px solid #7a7a7a;border-right-color:#b4b4b4"></div><div class="a" style="left:443.5px;top:578.5px;width:15.5px;height:8.5px;background:#e9e9e9;border:1px solid #b0b0b0"></div><div class="a" style="left:443.5px;top:588.0px;width:15.5px;height:8px;background:#e9e9e9;border:1px solid #b0b0b0"></div><svg class="a" style="left:443.5px;top:578.5px" width="15" height="19"><polygon points="4.6,4.8 7.35,2.0 10.1,4.8" fill="#000"/><polygon points="4.6,11.4 10.1,11.4 7.35,14.2" fill="#000"/></svg><svg class="a" style="left:471px;top:436px" width="10" height="8"><polyline points="1.2,5.8 4.8,2.2 8.4,5.8" fill="none" stroke="#555" stroke-width="2"/></svg><div class="a" style="left:468px;top:448px;width:15px;height:16px;background:#cdcdcd"></div><svg class="a" style="left:471px;top:586px" width="10" height="8"><polyline points="1.2,2.2 4.8,5.8 8.4,2.2" fill="none" stroke="#555" stroke-width="2"/></svg><div class="a" style="left:5px;top:604px;font-size:11px;line-height:13px;color:#000">Eingang</div><div class="a" style="left:5px;top:619px;width:90px;height:22px;background:#e1e1e1;border:1px solid #adadad"></div><div class="a" style="left:10px;top:623.5px;font-size:11px;line-height:13px">Links</div><svg class="a" style="left:82px;top:628.0px" width="9" height="6"><polyline points="0.2,0.9 4.0,4.6 7.8,0.9" fill="none" stroke="#404040" stroke-width="1.05"/></svg><div class="a" style="left:104px;top:604px;font-size:11px;line-height:13px;color:#000">Delay(ms)</div><div class="a" style="left:104px;top:619px;width:75px;height:21px;background:#fff;border:1px solid #7a7a7a;border-right-color:#b4b4b4"></div><div class="a" style="left:113px;top:623.0px;font-size:10.5px;line-height:13px">0.00</div><div class="a" style="left:161.5px;top:620.5px;width:15.5px;height:8.5px;background:#e9e9e9;border:1px solid #b0b0b0"></div><div class="a" style="left:161.5px;top:630.0px;width:15.5px;height:8px;background:#e9e9e9;border:1px solid #b0b0b0"></div><svg class="a" style="left:161.5px;top:620.5px" width="15" height="19"><polygon points="4.6,4.8 7.35,2.0 10.1,4.8" fill="#000"/><polygon points="4.6,11.4 10.1,11.4 7.35,14.2" fill="#000"/></svg><div class="a" style="left:182px;top:604px;font-size:11px;line-height:13px;color:#000">Phase</div><div class="a" style="left:182px;top:619px;width:75px;height:22px;background:#e1e1e1;border:1px solid #adadad"></div><div class="a" style="left:187px;top:623.5px;font-size:11px;line-height:13px">Normal</div><svg class="a" style="left:244px;top:628.0px" width="9" height="6"><polyline points="0.2,0.9 4.0,4.6 7.8,0.9" fill="none" stroke="#404040" stroke-width="1.05"/></svg><div class="a" style="left:260px;top:604px;font-size:11px;line-height:13px;color:#000">Pegel(dB)</div><div class="a" style="left:260px;top:619px;width:60px;height:21px;background:#fff;border:1px solid #7a7a7a;border-right-color:#b4b4b4"></div><div class="a" style="left:269px;top:623.0px;font-size:10.5px;line-height:13px">0.0</div><div class="a" style="left:302.5px;top:620.5px;width:15.5px;height:8.5px;background:#e9e9e9;border:1px solid #b0b0b0"></div><div class="a" style="left:302.5px;top:630.0px;width:15.5px;height:8px;background:#e9e9e9;border:1px solid #b0b0b0"></div><svg class="a" style="left:302.5px;top:620.5px" width="15" height="19"><polygon points="4.6,4.8 7.35,2.0 10.1,4.8" fill="#000"/><polygon points="4.6,11.4 10.1,11.4 7.35,14.2" fill="#000"/></svg>
<div class="a" style="left:500px;top:372px;font-size:11px;line-height:13px;color:#000">Anzeige</div><div class="a" style="left:500px;top:387px;width:240px;height:21px;background:#e1e1e1;border:1px solid #adadad"></div><div class="a" style="left:505px;top:391.0px;font-size:11px;line-height:13px">Rechts: Sprungantwort</div><svg class="a" style="left:727px;top:395.5px" width="9" height="6"><polyline points="0.2,0.9 4.0,4.6 7.8,0.9" fill="none" stroke="#404040" stroke-width="1.05"/></svg><div class="a" style="left:764px;top:372px;font-size:11px;line-height:13px;color:#000">Offset</div><div class="a" style="left:764px;top:386px;width:60px;height:21px;background:#fff;border:1px solid #7a7a7a;border-right-color:#b4b4b4"></div><div class="a" style="left:773px;top:390.0px;font-size:10.5px;line-height:13px">0.0</div><div class="a" style="left:806.5px;top:387.5px;width:15.5px;height:8.5px;background:#e9e9e9;border:1px solid #b0b0b0"></div><div class="a" style="left:806.5px;top:397.0px;width:15.5px;height:8px;background:#e9e9e9;border:1px solid #b0b0b0"></div><svg class="a" style="left:806.5px;top:387.5px" width="15" height="19"><polygon points="4.6,4.8 7.35,2.0 10.1,4.8" fill="#000"/><polygon points="4.6,11.4 10.1,11.4 7.35,14.2" fill="#000"/></svg><div class="a" style="left:833px;top:372px;font-size:11px;line-height:13px;color:#000">Smooth</div><div class="a" style="left:833px;top:387px;width:60px;height:21px;background:#e1e1e1;border:1px solid #adadad"></div><div class="a" style="left:838px;top:391.0px;font-size:11px;line-height:13px">1/48</div><svg class="a" style="left:880px;top:395.5px" width="9" height="6"><polyline points="0.2,0.9 4.0,4.6 7.8,0.9" fill="none" stroke="#404040" stroke-width="1.05"/></svg><div class="a" style="left:906px;top:387px;width:73px;height:21px;background:#e1e1e1;border:1px solid #adadad;font-size:11px;line-height:19px;text-align:center;color:#000">Anzeigen</div><div class="a" style="left:503px;top:414px;font-size:11px;line-height:13px;color:#000">Filter</div><div class="a" style="left:617px;top:414px;font-size:11px;line-height:13px;color:#000">Fc (Hz)</div><div class="a" style="left:689px;top:414px;font-size:11px;line-height:13px;color:#000">Qc</div><div class="a" style="left:755px;top:414px;font-size:11px;line-height:13px;color:#000">Pegel (dB)</div><div class="a" style="left:821px;top:414px;font-size:11px;line-height:13px;color:#000">Fp (Hz)</div><div class="a" style="left:893px;top:414px;font-size:11px;line-height:13px;color:#000">Qp</div><div class="a" style="left:509px;top:434.5px;font-size:11px;line-height:13px;color:#000">1</div><div class="a" style="left:521px;top:430px;width:90px;height:22px;background:#e1e1e1;border:1px solid #adadad"></div><div class="a" style="left:526px;top:434.5px;font-size:10.7px;line-height:13px">HochPass</div><svg class="a" style="left:598px;top:439.0px" width="9" height="6"><polyline points="0.2,0.9 4.0,4.6 7.8,0.9" fill="none" stroke="#404040" stroke-width="1.05"/></svg><div class="a" style="left:617px;top:430px;width:69px;height:21px;background:#fff;border:1px solid #7a7a7a;border-right-color:#b4b4b4"></div><div class="a" style="left:630px;top:434.0px;font-size:10.5px;line-height:13px">1000.0</div><div class="a" style="left:668.5px;top:431.5px;width:15.5px;height:8.5px;background:#e9e9e9;border:1px solid #b0b0b0"></div><div class="a" style="left:668.5px;top:441.0px;width:15.5px;height:8px;background:#e9e9e9;border:1px solid #b0b0b0"></div><svg class="a" style="left:668.5px;top:431.5px" width="15" height="19"><polygon points="4.6,4.8 7.35,2.0 10.1,4.8" fill="#000"/><polygon points="4.6,11.4 10.1,11.4 7.35,14.2" fill="#000"/></svg><div class="a" style="left:689px;top:430px;width:63px;height:21px;background:#fff;border:1px solid #7a7a7a;border-right-color:#b4b4b4"></div><div class="a" style="left:698px;top:434.0px;font-size:10.5px;line-height:13px">0.710</div><div class="a" style="left:734.5px;top:431.5px;width:15.5px;height:8.5px;background:#e9e9e9;border:1px solid #b0b0b0"></div><div class="a" style="left:734.5px;top:441.0px;width:15.5px;height:8px;background:#e9e9e9;border:1px solid #b0b0b0"></div><svg class="a" style="left:734.5px;top:431.5px" width="15" height="19"><polygon points="4.6,4.8 7.35,2.0 10.1,4.8" fill="#000"/><polygon points="4.6,11.4 10.1,11.4 7.35,14.2" fill="#000"/></svg><div class="a" style="left:755px;top:430px;width:60px;height:21px;background:#fff;border:1px solid #7a7a7a;border-right-color:#b4b4b4"></div><div class="a" style="left:764px;top:434.0px;font-size:10.5px;line-height:13px">0.0</div><div class="a" style="left:797.5px;top:431.5px;width:15.5px;height:8.5px;background:#e9e9e9;border:1px solid #b0b0b0"></div><div class="a" style="left:797.5px;top:441.0px;width:15.5px;height:8px;background:#e9e9e9;border:1px solid #b0b0b0"></div><svg class="a" style="left:797.5px;top:431.5px" width="15" height="19"><polygon points="4.6,4.8 7.35,2.0 10.1,4.8" fill="#000"/><polygon points="4.6,11.4 10.1,11.4 7.35,14.2" fill="#000"/></svg><div class="a" style="left:821px;top:430px;width:69px;height:21px;background:#fff;border:1px solid #7a7a7a;border-right-color:#b4b4b4"></div><div class="a" style="left:872.5px;top:431.5px;width:15.5px;height:8.5px;background:#e9e9e9;border:1px solid #b0b0b0"></div><div class="a" style="left:872.5px;top:441.0px;width:15.5px;height:8px;background:#e9e9e9;border:1px solid #b0b0b0"></div><svg class="a" style="left:872.5px;top:431.5px" width="15" height="19"><polygon points="4.6,4.8 7.35,2.0 10.1,4.8" fill="#000"/><polygon points="4.6,11.4 10.1,11.4 7.35,14.2" fill="#000"/></svg><div class="a" style="left:893px;top:430px;width:63px;height:21px;background:#fff;border:1px solid #7a7a7a;border-right-color:#b4b4b4"></div><div class="a" style="left:938.5px;top:431.5px;width:15.5px;height:8.5px;background:#e9e9e9;border:1px solid #b0b0b0"></div><div class="a" style="left:938.5px;top:441.0px;width:15.5px;height:8px;background:#e9e9e9;border:1px solid #b0b0b0"></div><svg class="a" style="left:938.5px;top:431.5px" width="15" height="19"><polygon points="4.6,4.8 7.35,2.0 10.1,4.8" fill="#000"/><polygon points="4.6,11.4 10.1,11.4 7.35,14.2" fill="#000"/></svg><div class="a" style="left:509px;top:459.5px;font-size:11px;line-height:13px;color:#000">2</div><div class="a" style="left:521px;top:455px;width:90px;height:22px;background:#e1e1e1;border:1px solid #adadad"></div><div class="a" style="left:526px;top:459.5px;font-size:10.7px;line-height:13px">HochPass</div><svg class="a" style="left:598px;top:464.0px" width="9" height="6"><polyline points="0.2,0.9 4.0,4.6 7.8,0.9" fill="none" stroke="#404040" stroke-width="1.05"/></svg><div class="a" style="left:617px;top:455px;width:69px;height:21px;background:#fff;border:1px solid #7a7a7a;border-right-color:#b4b4b4"></div><div class="a" style="left:630px;top:459.0px;font-size:10.5px;line-height:13px">1000.0</div><div class="a" style="left:668.5px;top:456.5px;width:15.5px;height:8.5px;background:#e9e9e9;border:1px solid #b0b0b0"></div><div class="a" style="left:668.5px;top:466.0px;width:15.5px;height:8px;background:#e9e9e9;border:1px solid #b0b0b0"></div><svg class="a" style="left:668.5px;top:456.5px" width="15" height="19"><polygon points="4.6,4.8 7.35,2.0 10.1,4.8" fill="#000"/><polygon points="4.6,11.4 10.1,11.4 7.35,14.2" fill="#000"/></svg><div class="a" style="left:689px;top:455px;width:63px;height:21px;background:#fff;border:1px solid #7a7a7a;border-right-color:#b4b4b4"></div><div class="a" style="left:698px;top:459.0px;font-size:10.5px;line-height:13px">0.710</div><div class="a" style="left:734.5px;top:456.5px;width:15.5px;height:8.5px;background:#e9e9e9;border:1px solid #b0b0b0"></div><div class="a" style="left:734.5px;top:466.0px;width:15.5px;height:8px;background:#e9e9e9;border:1px solid #b0b0b0"></div><svg class="a" style="left:734.5px;top:456.5px" width="15" height="19"><polygon points="4.6,4.8 7.35,2.0 10.1,4.8" fill="#000"/><polygon points="4.6,11.4 10.1,11.4 7.35,14.2" fill="#000"/></svg><div class="a" style="left:755px;top:455px;width:60px;height:21px;background:#fff;border:1px solid #7a7a7a;border-right-color:#b4b4b4"></div><div class="a" style="left:764px;top:459.0px;font-size:10.5px;line-height:13px">0.0</div><div class="a" style="left:797.5px;top:456.5px;width:15.5px;height:8.5px;background:#e9e9e9;border:1px solid #b0b0b0"></div><div class="a" style="left:797.5px;top:466.0px;width:15.5px;height:8px;background:#e9e9e9;border:1px solid #b0b0b0"></div><svg class="a" style="left:797.5px;top:456.5px" width="15" height="19"><polygon points="4.6,4.8 7.35,2.0 10.1,4.8" fill="#000"/><polygon points="4.6,11.4 10.1,11.4 7.35,14.2" fill="#000"/></svg><div class="a" style="left:821px;top:455px;width:69px;height:21px;background:#fff;border:1px solid #7a7a7a;border-right-color:#b4b4b4"></div><div class="a" style="left:872.5px;top:456.5px;width:15.5px;height:8.5px;background:#e9e9e9;border:1px solid #b0b0b0"></div><div class="a" style="left:872.5px;top:466.0px;width:15.5px;height:8px;background:#e9e9e9;border:1px solid #b0b0b0"></div><svg class="a" style="left:872.5px;top:456.5px" width="15" height="19"><polygon points="4.6,4.8 7.35,2.0 10.1,4.8" fill="#000"/><polygon points="4.6,11.4 10.1,11.4 7.35,14.2" fill="#000"/></svg><div class="a" style="left:893px;top:455px;width:63px;height:21px;background:#fff;border:1px solid #7a7a7a;border-right-color:#b4b4b4"></div><div class="a" style="left:938.5px;top:456.5px;width:15.5px;height:8.5px;background:#e9e9e9;border:1px solid #b0b0b0"></div><div class="a" style="left:938.5px;top:466.0px;width:15.5px;height:8px;background:#e9e9e9;border:1px solid #b0b0b0"></div><svg class="a" style="left:938.5px;top:456.5px" width="15" height="19"><polygon points="4.6,4.8 7.35,2.0 10.1,4.8" fill="#000"/><polygon points="4.6,11.4 10.1,11.4 7.35,14.2" fill="#000"/></svg><div class="a" style="left:509px;top:483.5px;font-size:11px;line-height:13px;color:#000">3</div><div class="a" style="left:521px;top:479px;width:90px;height:22px;background:#e1e1e1;border:1px solid #adadad"></div><div class="a" style="left:526px;top:483.5px;font-size:10.8px;line-height:13px">unbenutzt</div><svg class="a" style="left:598px;top:488.0px" width="9" height="6"><polyline points="0.2,0.9 4.0,4.6 7.8,0.9" fill="none" stroke="#404040" stroke-width="1.05"/></svg><div class="a" style="left:617px;top:479px;width:69px;height:21px;background:#fff;border:1px solid #7a7a7a;border-right-color:#b4b4b4"></div><div class="a" style="left:668.5px;top:480.5px;width:15.5px;height:8.5px;background:#e9e9e9;border:1px solid #b0b0b0"></div><div class="a" style="left:668.5px;top:490.0px;width:15.5px;height:8px;background:#e9e9e9;border:1px solid #b0b0b0"></div><svg class="a" style="left:668.5px;top:480.5px" width="15" height="19"><polygon points="4.6,4.8 7.35,2.0 10.1,4.8" fill="#000"/><polygon points="4.6,11.4 10.1,11.4 7.35,14.2" fill="#000"/></svg><div class="a" style="left:689px;top:479px;width:63px;height:21px;background:#fff;border:1px solid #7a7a7a;border-right-color:#b4b4b4"></div><div class="a" style="left:734.5px;top:480.5px;width:15.5px;height:8.5px;background:#e9e9e9;border:1px solid #b0b0b0"></div><div class="a" style="left:734.5px;top:490.0px;width:15.5px;height:8px;background:#e9e9e9;border:1px solid #b0b0b0"></div><svg class="a" style="left:734.5px;top:480.5px" width="15" height="19"><polygon points="4.6,4.8 7.35,2.0 10.1,4.8" fill="#000"/><polygon points="4.6,11.4 10.1,11.4 7.35,14.2" fill="#000"/></svg><div class="a" style="left:755px;top:479px;width:60px;height:21px;background:#fff;border:1px solid #7a7a7a;border-right-color:#b4b4b4"></div><div class="a" style="left:797.5px;top:480.5px;width:15.5px;height:8.5px;background:#e9e9e9;border:1px solid #b0b0b0"></div><div class="a" style="left:797.5px;top:490.0px;width:15.5px;height:8px;background:#e9e9e9;border:1px solid #b0b0b0"></div><svg class="a" style="left:797.5px;top:480.5px" width="15" height="19"><polygon points="4.6,4.8 7.35,2.0 10.1,4.8" fill="#000"/><polygon points="4.6,11.4 10.1,11.4 7.35,14.2" fill="#000"/></svg><div class="a" style="left:821px;top:479px;width:69px;height:21px;background:#fff;border:1px solid #7a7a7a;border-right-color:#b4b4b4"></div><div class="a" style="left:872.5px;top:480.5px;width:15.5px;height:8.5px;background:#e9e9e9;border:1px solid #b0b0b0"></div><div class="a" style="left:872.5px;top:490.0px;width:15.5px;height:8px;background:#e9e9e9;border:1px solid #b0b0b0"></div><svg class="a" style="left:872.5px;top:480.5px" width="15" height="19"><polygon points="4.6,4.8 7.35,2.0 10.1,4.8" fill="#000"/><polygon points="4.6,11.4 10.1,11.4 7.35,14.2" fill="#000"/></svg><div class="a" style="left:893px;top:479px;width:63px;height:21px;background:#fff;border:1px solid #7a7a7a;border-right-color:#b4b4b4"></div><div class="a" style="left:938.5px;top:480.5px;width:15.5px;height:8.5px;background:#e9e9e9;border:1px solid #b0b0b0"></div><div class="a" style="left:938.5px;top:490.0px;width:15.5px;height:8px;background:#e9e9e9;border:1px solid #b0b0b0"></div><svg class="a" style="left:938.5px;top:480.5px" width="15" height="19"><polygon points="4.6,4.8 7.35,2.0 10.1,4.8" fill="#000"/><polygon points="4.6,11.4 10.1,11.4 7.35,14.2" fill="#000"/></svg><div class="a" style="left:509px;top:508.5px;font-size:11px;line-height:13px;color:#000">4</div><div class="a" style="left:521px;top:504px;width:90px;height:22px;background:#e1e1e1;border:1px solid #adadad"></div><div class="a" style="left:526px;top:508.5px;font-size:10.8px;line-height:13px">unbenutzt</div><svg class="a" style="left:598px;top:513.0px" width="9" height="6"><polyline points="0.2,0.9 4.0,4.6 7.8,0.9" fill="none" stroke="#404040" stroke-width="1.05"/></svg><div class="a" style="left:617px;top:504px;width:69px;height:21px;background:#fff;border:1px solid #7a7a7a;border-right-color:#b4b4b4"></div><div class="a" style="left:668.5px;top:505.5px;width:15.5px;height:8.5px;background:#e9e9e9;border:1px solid #b0b0b0"></div><div class="a" style="left:668.5px;top:515.0px;width:15.5px;height:8px;background:#e9e9e9;border:1px solid #b0b0b0"></div><svg class="a" style="left:668.5px;top:505.5px" width="15" height="19"><polygon points="4.6,4.8 7.35,2.0 10.1,4.8" fill="#000"/><polygon points="4.6,11.4 10.1,11.4 7.35,14.2" fill="#000"/></svg><div class="a" style="left:689px;top:504px;width:63px;height:21px;background:#fff;border:1px solid #7a7a7a;border-right-color:#b4b4b4"></div><div class="a" style="left:734.5px;top:505.5px;width:15.5px;height:8.5px;background:#e9e9e9;border:1px solid #b0b0b0"></div><div class="a" style="left:734.5px;top:515.0px;width:15.5px;height:8px;background:#e9e9e9;border:1px solid #b0b0b0"></div><svg class="a" style="left:734.5px;top:505.5px" width="15" height="19"><polygon points="4.6,4.8 7.35,2.0 10.1,4.8" fill="#000"/><polygon points="4.6,11.4 10.1,11.4 7.35,14.2" fill="#000"/></svg><div class="a" style="left:755px;top:504px;width:60px;height:21px;background:#fff;border:1px solid #7a7a7a;border-right-color:#b4b4b4"></div><div class="a" style="left:797.5px;top:505.5px;width:15.5px;height:8.5px;background:#e9e9e9;border:1px solid #b0b0b0"></div><div class="a" style="left:797.5px;top:515.0px;width:15.5px;height:8px;background:#e9e9e9;border:1px solid #b0b0b0"></div><svg class="a" style="left:797.5px;top:505.5px" width="15" height="19"><polygon points="4.6,4.8 7.35,2.0 10.1,4.8" fill="#000"/><polygon points="4.6,11.4 10.1,11.4 7.35,14.2" fill="#000"/></svg><div class="a" style="left:821px;top:504px;width:69px;height:21px;background:#fff;border:1px solid #7a7a7a;border-right-color:#b4b4b4"></div><div class="a" style="left:872.5px;top:505.5px;width:15.5px;height:8.5px;background:#e9e9e9;border:1px solid #b0b0b0"></div><div class="a" style="left:872.5px;top:515.0px;width:15.5px;height:8px;background:#e9e9e9;border:1px solid #b0b0b0"></div><svg class="a" style="left:872.5px;top:505.5px" width="15" height="19"><polygon points="4.6,4.8 7.35,2.0 10.1,4.8" fill="#000"/><polygon points="4.6,11.4 10.1,11.4 7.35,14.2" fill="#000"/></svg><div class="a" style="left:893px;top:504px;width:63px;height:21px;background:#fff;border:1px solid #7a7a7a;border-right-color:#b4b4b4"></div><div class="a" style="left:938.5px;top:505.5px;width:15.5px;height:8.5px;background:#e9e9e9;border:1px solid #b0b0b0"></div><div class="a" style="left:938.5px;top:515.0px;width:15.5px;height:8px;background:#e9e9e9;border:1px solid #b0b0b0"></div><svg class="a" style="left:938.5px;top:505.5px" width="15" height="19"><polygon points="4.6,4.8 7.35,2.0 10.1,4.8" fill="#000"/><polygon points="4.6,11.4 10.1,11.4 7.35,14.2" fill="#000"/></svg><div class="a" style="left:509px;top:532.5px;font-size:11px;line-height:13px;color:#000">5</div><div class="a" style="left:521px;top:528px;width:90px;height:22px;background:#e1e1e1;border:1px solid #adadad"></div><div class="a" style="left:526px;top:532.5px;font-size:10.8px;line-height:13px">unbenutzt</div><svg class="a" style="left:598px;top:537.0px" width="9" height="6"><polyline points="0.2,0.9 4.0,4.6 7.8,0.9" fill="none" stroke="#404040" stroke-width="1.05"/></svg><div class="a" style="left:617px;top:528px;width:69px;height:21px;background:#fff;border:1px solid #7a7a7a;border-right-color:#b4b4b4"></div><div class="a" style="left:668.5px;top:529.5px;width:15.5px;height:8.5px;background:#e9e9e9;border:1px solid #b0b0b0"></div><div class="a" style="left:668.5px;top:539.0px;width:15.5px;height:8px;background:#e9e9e9;border:1px solid #b0b0b0"></div><svg class="a" style="left:668.5px;top:529.5px" width="15" height="19"><polygon points="4.6,4.8 7.35,2.0 10.1,4.8" fill="#000"/><polygon points="4.6,11.4 10.1,11.4 7.35,14.2" fill="#000"/></svg><div class="a" style="left:689px;top:528px;width:63px;height:21px;background:#fff;border:1px solid #7a7a7a;border-right-color:#b4b4b4"></div><div class="a" style="left:734.5px;top:529.5px;width:15.5px;height:8.5px;background:#e9e9e9;border:1px solid #b0b0b0"></div><div class="a" style="left:734.5px;top:539.0px;width:15.5px;height:8px;background:#e9e9e9;border:1px solid #b0b0b0"></div><svg class="a" style="left:734.5px;top:529.5px" width="15" height="19"><polygon points="4.6,4.8 7.35,2.0 10.1,4.8" fill="#000"/><polygon points="4.6,11.4 10.1,11.4 7.35,14.2" fill="#000"/></svg><div class="a" style="left:755px;top:528px;width:60px;height:21px;background:#fff;border:1px solid #7a7a7a;border-right-color:#b4b4b4"></div><div class="a" style="left:797.5px;top:529.5px;width:15.5px;height:8.5px;background:#e9e9e9;border:1px solid #b0b0b0"></div><div class="a" style="left:797.5px;top:539.0px;width:15.5px;height:8px;background:#e9e9e9;border:1px solid #b0b0b0"></div><svg class="a" style="left:797.5px;top:529.5px" width="15" height="19"><polygon points="4.6,4.8 7.35,2.0 10.1,4.8" fill="#000"/><polygon points="4.6,11.4 10.1,11.4 7.35,14.2" fill="#000"/></svg><div class="a" style="left:821px;top:528px;width:69px;height:21px;background:#fff;border:1px solid #7a7a7a;border-right-color:#b4b4b4"></div><div class="a" style="left:872.5px;top:529.5px;width:15.5px;height:8.5px;background:#e9e9e9;border:1px solid #b0b0b0"></div><div class="a" style="left:872.5px;top:539.0px;width:15.5px;height:8px;background:#e9e9e9;border:1px solid #b0b0b0"></div><svg class="a" style="left:872.5px;top:529.5px" width="15" height="19"><polygon points="4.6,4.8 7.35,2.0 10.1,4.8" fill="#000"/><polygon points="4.6,11.4 10.1,11.4 7.35,14.2" fill="#000"/></svg><div class="a" style="left:893px;top:528px;width:63px;height:21px;background:#fff;border:1px solid #7a7a7a;border-right-color:#b4b4b4"></div><div class="a" style="left:938.5px;top:529.5px;width:15.5px;height:8.5px;background:#e9e9e9;border:1px solid #b0b0b0"></div><div class="a" style="left:938.5px;top:539.0px;width:15.5px;height:8px;background:#e9e9e9;border:1px solid #b0b0b0"></div><svg class="a" style="left:938.5px;top:529.5px" width="15" height="19"><polygon points="4.6,4.8 7.35,2.0 10.1,4.8" fill="#000"/><polygon points="4.6,11.4 10.1,11.4 7.35,14.2" fill="#000"/></svg><div class="a" style="left:509px;top:557.5px;font-size:11px;line-height:13px;color:#000">6</div><div class="a" style="left:521px;top:553px;width:90px;height:22px;background:#e1e1e1;border:1px solid #adadad"></div><div class="a" style="left:526px;top:557.5px;font-size:10.8px;line-height:13px">unbenutzt</div><svg class="a" style="left:598px;top:562.0px" width="9" height="6"><polyline points="0.2,0.9 4.0,4.6 7.8,0.9" fill="none" stroke="#404040" stroke-width="1.05"/></svg><div class="a" style="left:617px;top:553px;width:69px;height:21px;background:#fff;border:1px solid #7a7a7a;border-right-color:#b4b4b4"></div><div class="a" style="left:668.5px;top:554.5px;width:15.5px;height:8.5px;background:#e9e9e9;border:1px solid #b0b0b0"></div><div class="a" style="left:668.5px;top:564.0px;width:15.5px;height:8px;background:#e9e9e9;border:1px solid #b0b0b0"></div><svg class="a" style="left:668.5px;top:554.5px" width="15" height="19"><polygon points="4.6,4.8 7.35,2.0 10.1,4.8" fill="#000"/><polygon points="4.6,11.4 10.1,11.4 7.35,14.2" fill="#000"/></svg><div class="a" style="left:689px;top:553px;width:63px;height:21px;background:#fff;border:1px solid #7a7a7a;border-right-color:#b4b4b4"></div><div class="a" style="left:734.5px;top:554.5px;width:15.5px;height:8.5px;background:#e9e9e9;border:1px solid #b0b0b0"></div><div class="a" style="left:734.5px;top:564.0px;width:15.5px;height:8px;background:#e9e9e9;border:1px solid #b0b0b0"></div><svg class="a" style="left:734.5px;top:554.5px" width="15" height="19"><polygon points="4.6,4.8 7.35,2.0 10.1,4.8" fill="#000"/><polygon points="4.6,11.4 10.1,11.4 7.35,14.2" fill="#000"/></svg><div class="a" style="left:755px;top:553px;width:60px;height:21px;background:#fff;border:1px solid #7a7a7a;border-right-color:#b4b4b4"></div><div class="a" style="left:797.5px;top:554.5px;width:15.5px;height:8.5px;background:#e9e9e9;border:1px solid #b0b0b0"></div><div class="a" style="left:797.5px;top:564.0px;width:15.5px;height:8px;background:#e9e9e9;border:1px solid #b0b0b0"></div><svg class="a" style="left:797.5px;top:554.5px" width="15" height="19"><polygon points="4.6,4.8 7.35,2.0 10.1,4.8" fill="#000"/><polygon points="4.6,11.4 10.1,11.4 7.35,14.2" fill="#000"/></svg><div class="a" style="left:821px;top:553px;width:69px;height:21px;background:#fff;border:1px solid #7a7a7a;border-right-color:#b4b4b4"></div><div class="a" style="left:872.5px;top:554.5px;width:15.5px;height:8.5px;background:#e9e9e9;border:1px solid #b0b0b0"></div><div class="a" style="left:872.5px;top:564.0px;width:15.5px;height:8px;background:#e9e9e9;border:1px solid #b0b0b0"></div><svg class="a" style="left:872.5px;top:554.5px" width="15" height="19"><polygon points="4.6,4.8 7.35,2.0 10.1,4.8" fill="#000"/><polygon points="4.6,11.4 10.1,11.4 7.35,14.2" fill="#000"/></svg><div class="a" style="left:893px;top:553px;width:63px;height:21px;background:#fff;border:1px solid #7a7a7a;border-right-color:#b4b4b4"></div><div class="a" style="left:938.5px;top:554.5px;width:15.5px;height:8.5px;background:#e9e9e9;border:1px solid #b0b0b0"></div><div class="a" style="left:938.5px;top:564.0px;width:15.5px;height:8px;background:#e9e9e9;border:1px solid #b0b0b0"></div><svg class="a" style="left:938.5px;top:554.5px" width="15" height="19"><polygon points="4.6,4.8 7.35,2.0 10.1,4.8" fill="#000"/><polygon points="4.6,11.4 10.1,11.4 7.35,14.2" fill="#000"/></svg><div class="a" style="left:509px;top:581.5px;font-size:11px;line-height:13px;color:#000">7</div><div class="a" style="left:521px;top:577px;width:90px;height:22px;background:#e1e1e1;border:1px solid #adadad"></div><div class="a" style="left:526px;top:581.5px;font-size:10.8px;line-height:13px">unbenutzt</div><svg class="a" style="left:598px;top:586.0px" width="9" height="6"><polyline points="0.2,0.9 4.0,4.6 7.8,0.9" fill="none" stroke="#404040" stroke-width="1.05"/></svg><div class="a" style="left:617px;top:577px;width:69px;height:21px;background:#fff;border:1px solid #7a7a7a;border-right-color:#b4b4b4"></div><div class="a" style="left:668.5px;top:578.5px;width:15.5px;height:8.5px;background:#e9e9e9;border:1px solid #b0b0b0"></div><div class="a" style="left:668.5px;top:588.0px;width:15.5px;height:8px;background:#e9e9e9;border:1px solid #b0b0b0"></div><svg class="a" style="left:668.5px;top:578.5px" width="15" height="19"><polygon points="4.6,4.8 7.35,2.0 10.1,4.8" fill="#000"/><polygon points="4.6,11.4 10.1,11.4 7.35,14.2" fill="#000"/></svg><div class="a" style="left:689px;top:577px;width:63px;height:21px;background:#fff;border:1px solid #7a7a7a;border-right-color:#b4b4b4"></div><div class="a" style="left:734.5px;top:578.5px;width:15.5px;height:8.5px;background:#e9e9e9;border:1px solid #b0b0b0"></div><div class="a" style="left:734.5px;top:588.0px;width:15.5px;height:8px;background:#e9e9e9;border:1px solid #b0b0b0"></div><svg class="a" style="left:734.5px;top:578.5px" width="15" height="19"><polygon points="4.6,4.8 7.35,2.0 10.1,4.8" fill="#000"/><polygon points="4.6,11.4 10.1,11.4 7.35,14.2" fill="#000"/></svg><div class="a" style="left:755px;top:577px;width:60px;height:21px;background:#fff;border:1px solid #7a7a7a;border-right-color:#b4b4b4"></div><div class="a" style="left:797.5px;top:578.5px;width:15.5px;height:8.5px;background:#e9e9e9;border:1px solid #b0b0b0"></div><div class="a" style="left:797.5px;top:588.0px;width:15.5px;height:8px;background:#e9e9e9;border:1px solid #b0b0b0"></div><svg class="a" style="left:797.5px;top:578.5px" width="15" height="19"><polygon points="4.6,4.8 7.35,2.0 10.1,4.8" fill="#000"/><polygon points="4.6,11.4 10.1,11.4 7.35,14.2" fill="#000"/></svg><div class="a" style="left:821px;top:577px;width:69px;height:21px;background:#fff;border:1px solid #7a7a7a;border-right-color:#b4b4b4"></div><div class="a" style="left:872.5px;top:578.5px;width:15.5px;height:8.5px;background:#e9e9e9;border:1px solid #b0b0b0"></div><div class="a" style="left:872.5px;top:588.0px;width:15.5px;height:8px;background:#e9e9e9;border:1px solid #b0b0b0"></div><svg class="a" style="left:872.5px;top:578.5px" width="15" height="19"><polygon points="4.6,4.8 7.35,2.0 10.1,4.8" fill="#000"/><polygon points="4.6,11.4 10.1,11.4 7.35,14.2" fill="#000"/></svg><div class="a" style="left:893px;top:577px;width:63px;height:21px;background:#fff;border:1px solid #7a7a7a;border-right-color:#b4b4b4"></div><div class="a" style="left:938.5px;top:578.5px;width:15.5px;height:8.5px;background:#e9e9e9;border:1px solid #b0b0b0"></div><div class="a" style="left:938.5px;top:588.0px;width:15.5px;height:8px;background:#e9e9e9;border:1px solid #b0b0b0"></div><svg class="a" style="left:938.5px;top:578.5px" width="15" height="19"><polygon points="4.6,4.8 7.35,2.0 10.1,4.8" fill="#000"/><polygon points="4.6,11.4 10.1,11.4 7.35,14.2" fill="#000"/></svg><svg class="a" style="left:966px;top:436px" width="10" height="8"><polyline points="1.2,5.8 4.8,2.2 8.4,5.8" fill="none" stroke="#555" stroke-width="2"/></svg><div class="a" style="left:963px;top:448px;width:15px;height:16px;background:#cdcdcd"></div><svg class="a" style="left:966px;top:586px" width="10" height="8"><polyline points="1.2,2.2 4.8,5.8 8.4,2.2" fill="none" stroke="#555" stroke-width="2"/></svg><div class="a" style="left:500px;top:604px;font-size:11px;line-height:13px;color:#000">Eingang</div><div class="a" style="left:500px;top:619px;width:90px;height:22px;background:#e1e1e1;border:1px solid #adadad"></div><div class="a" style="left:505px;top:623.5px;font-size:11px;line-height:13px">Rechts</div><svg class="a" style="left:577px;top:628.0px" width="9" height="6"><polyline points="0.2,0.9 4.0,4.6 7.8,0.9" fill="none" stroke="#404040" stroke-width="1.05"/></svg><div class="a" style="left:599px;top:604px;font-size:11px;line-height:13px;color:#000">Delay(ms)</div><div class="a" style="left:599px;top:619px;width:75px;height:21px;background:#fff;border:1px solid #7a7a7a;border-right-color:#b4b4b4"></div><div class="a" style="left:608px;top:623.0px;font-size:10.5px;line-height:13px">1.02</div><div class="a" style="left:656.5px;top:620.5px;width:15.5px;height:8.5px;background:#e9e9e9;border:1px solid #b0b0b0"></div><div class="a" style="left:656.5px;top:630.0px;width:15.5px;height:8px;background:#e9e9e9;border:1px solid #b0b0b0"></div><svg class="a" style="left:656.5px;top:620.5px" width="15" height="19"><polygon points="4.6,4.8 7.35,2.0 10.1,4.8" fill="#000"/><polygon points="4.6,11.4 10.1,11.4 7.35,14.2" fill="#000"/></svg><div class="a" style="left:677px;top:604px;font-size:11px;line-height:13px;color:#000">Phase</div><div class="a" style="left:677px;top:619px;width:75px;height:22px;background:#e1e1e1;border:1px solid #adadad"></div><div class="a" style="left:682px;top:623.5px;font-size:11px;line-height:13px">Normal</div><svg class="a" style="left:739px;top:628.0px" width="9" height="6"><polyline points="0.2,0.9 4.0,4.6 7.8,0.9" fill="none" stroke="#404040" stroke-width="1.05"/></svg><div class="a" style="left:755px;top:604px;font-size:11px;line-height:13px;color:#000">Pegel(dB)</div><div class="a" style="left:755px;top:619px;width:60px;height:21px;background:#fff;border:1px solid #7a7a7a;border-right-color:#b4b4b4"></div><div class="a" style="left:764px;top:623.0px;font-size:10.5px;line-height:13px">0.0</div><div class="a" style="left:797.5px;top:620.5px;width:15.5px;height:8.5px;background:#e9e9e9;border:1px solid #b0b0b0"></div><div class="a" style="left:797.5px;top:630.0px;width:15.5px;height:8px;background:#e9e9e9;border:1px solid #b0b0b0"></div><svg class="a" style="left:797.5px;top:620.5px" width="15" height="19"><polygon points="4.6,4.8 7.35,2.0 10.1,4.8" fill="#000"/><polygon points="4.6,11.4 10.1,11.4 7.35,14.2" fill="#000"/></svg>
<div class="a" style="left:906px;top:620px;width:73px;height:23px;background:#cccccc;border:1px solid #bfbfbf;font-size:11px;line-height:21px;text-align:center;color:#9a9a9a">Senden</div>
<div class="a" style="left:0;top:659px;width:982px;height:1px;background:#fff"></div><div class="a" style="left:57px;top:660px;width:1px;height:21px;background:#d9d9d9"></div><div class="a" style="left:117px;top:660px;width:1px;height:21px;background:#d9d9d9"></div><div class="a" style="left:147px;top:660px;width:1px;height:21px;background:#d9d9d9"></div><div class="a" style="left:177px;top:660px;width:1px;height:21px;background:#d9d9d9"></div><div class="a" style="left:237px;top:660px;width:1px;height:21px;background:#d9d9d9"></div><div class="a" style="left:886px;top:660px;width:1px;height:21px;background:#d9d9d9"></div><div class="a" style="left:1px;top:665px;font-size:11px;line-height:13px;color:#000">Fertig</div><div class="a" style="left:62px;top:665px;font-size:11.6px;line-height:13px;color:#000">COM1</div><div class="a" style="left:182px;top:665px;font-size:11px;line-height:13px;color:#000">96000</div><svg class="a" style="left:123px;top:665px" width="14" height="10"><rect x="0" y="1" width="6" height="5" fill="#000"/><rect x="6" y="4" width="8" height="5" fill="#000"/><rect x="1" y="0" width="1" height="7" fill="#000"/><rect x="4" y="0" width="1" height="7" fill="#000"/><rect x="8" y="3" width="1" height="7" fill="#000"/><rect x="11" y="3" width="1" height="7" fill="#000"/></svg>
</body></html>
